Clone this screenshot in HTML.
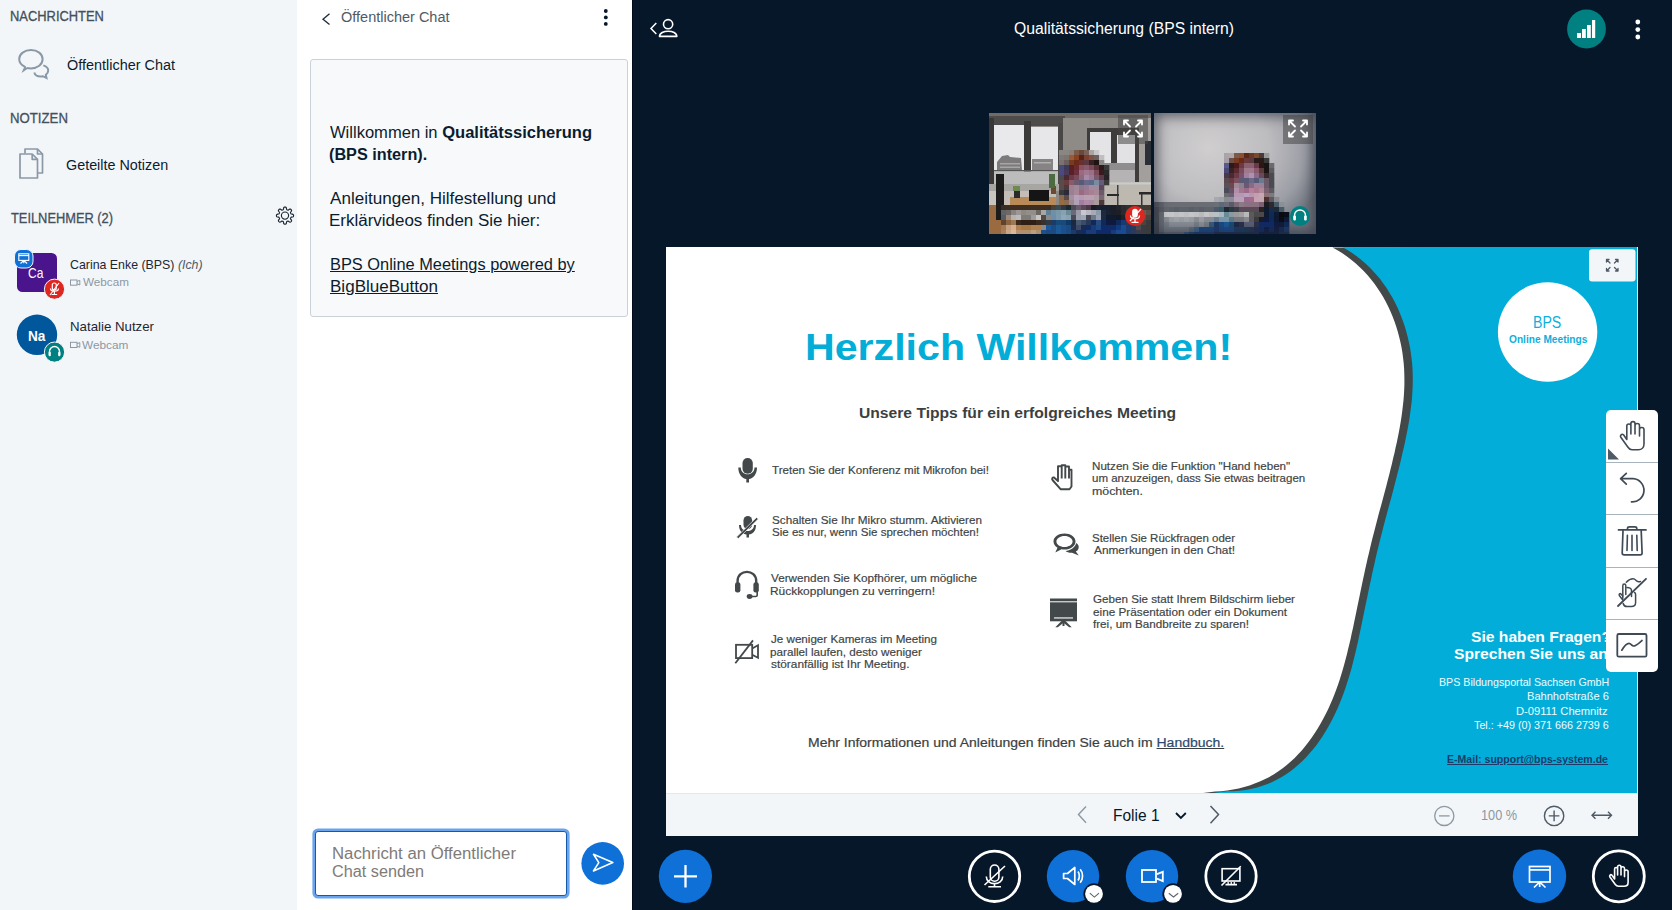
<!DOCTYPE html>
<html><head><meta charset="utf-8"><style>
html,body{margin:0;padding:0;width:1672px;height:910px;overflow:hidden;background:#06172A;font-family:"Liberation Sans",sans-serif;}
.a{position:absolute;}
.t{position:absolute;white-space:pre;line-height:normal;transform-origin:0 0;font-family:"Liberation Sans",sans-serif;}
svg{position:absolute;overflow:visible;}
</style></head><body>
<!-- Sidebar -->
<div class="a" style="left:0;top:0;width:297px;height:910px;background:#F3F6F9"></div>
<svg style="left:0;top:0" width="297" height="400" viewBox="0 0 297 400">
  <!-- chat bubbles icon -->
  <g fill="none" stroke="#8A99A7" stroke-width="2">
    <path d="M25.5,67.2 C21.5,65.2 19.2,62.3 19.2,59.2 C19.2,53.9 24.5,50 31,50 C37.5,50 42.6,53.9 42.6,59.2 C42.6,64.5 37.5,68.4 31,68.4 C29.5,68.4 28.2,68.3 27,68"/>
    <path d="M43.3,65.4 C46.3,66.3 48.2,68.2 48.2,70.6 C48.2,72.3 47.3,73.8 45.8,74.9 L46.5,78 L42.8,76.2 C42,76.4 41.3,76.5 40.5,76.5 C37.3,76.5 34.9,74.8 34.3,72.5"/>
  </g>
  <path d="M24.5,66.3 L28.2,68.5 L21.5,73 Z" fill="#8A99A7"/>
  <!-- notes icon -->
  <g fill="none" stroke="#8A99A7" stroke-width="1.7" stroke-linejoin="round">
    <path d="M25,153.5 L25,149 L37.5,149 L42.5,154 L42.5,173 L38,173"/>
    <path d="M37.5,149 L37.5,154 L42.5,154"/>
    <path d="M20,154 L32.2,154 L37.5,159.3 L37.5,178 L20,178 Z"/>
    <path d="M32.2,154 L32.2,159.3 L37.5,159.3"/>
  </g>
  <!-- gear -->
  <g transform="translate(285,215.6)" fill="none" stroke="#1B2733" stroke-width="1.15">
    <path d="M0.00,-8.55 L0.34,-8.54 L0.67,-8.49 L0.99,-8.35 L1.26,-7.98 L1.43,-7.21 L1.55,-6.44 L1.71,-6.06 L1.91,-5.89 L2.13,-5.78 L2.35,-5.68 L2.58,-5.59 L2.81,-5.51 L3.07,-5.49 L3.46,-5.65 L4.08,-6.11 L4.75,-6.53 L5.21,-6.60 L5.53,-6.47 L5.80,-6.27 L6.05,-6.05 L6.27,-5.80 L6.47,-5.53 L6.60,-5.21 L6.53,-4.75 L6.11,-4.08 L5.65,-3.46 L5.49,-3.07 L5.51,-2.81 L5.59,-2.58 L5.68,-2.35 L5.78,-2.13 L5.89,-1.91 L6.06,-1.71 L6.44,-1.55 L7.21,-1.43 L7.98,-1.26 L8.35,-0.99 L8.49,-0.67 L8.54,-0.34 L8.55,-0.00 L8.54,0.34 L8.49,0.67 L8.35,0.99 L7.98,1.26 L7.21,1.43 L6.44,1.55 L6.06,1.71 L5.89,1.91 L5.78,2.13 L5.68,2.35 L5.59,2.58 L5.51,2.81 L5.49,3.07 L5.65,3.46 L6.11,4.08 L6.53,4.75 L6.60,5.21 L6.47,5.53 L6.27,5.80 L6.05,6.05 L5.80,6.27 L5.53,6.47 L5.21,6.60 L4.75,6.53 L4.08,6.11 L3.46,5.65 L3.07,5.49 L2.81,5.51 L2.58,5.59 L2.35,5.68 L2.13,5.78 L1.91,5.89 L1.71,6.06 L1.55,6.44 L1.43,7.21 L1.26,7.98 L0.99,8.35 L0.67,8.49 L0.34,8.54 L0.00,8.55 L-0.34,8.54 L-0.67,8.49 L-0.99,8.35 L-1.26,7.98 L-1.43,7.21 L-1.55,6.44 L-1.71,6.06 L-1.91,5.89 L-2.13,5.78 L-2.35,5.68 L-2.58,5.59 L-2.81,5.51 L-3.07,5.49 L-3.46,5.65 L-4.08,6.11 L-4.75,6.53 L-5.21,6.60 L-5.53,6.47 L-5.80,6.27 L-6.05,6.05 L-6.27,5.80 L-6.47,5.53 L-6.60,5.21 L-6.53,4.75 L-6.11,4.08 L-5.65,3.46 L-5.49,3.07 L-5.51,2.81 L-5.59,2.58 L-5.68,2.35 L-5.78,2.13 L-5.89,1.91 L-6.06,1.71 L-6.44,1.55 L-7.21,1.43 L-7.98,1.26 L-8.35,0.99 L-8.49,0.67 L-8.54,0.34 L-8.55,0.00 L-8.54,-0.34 L-8.49,-0.67 L-8.35,-0.99 L-7.98,-1.26 L-7.21,-1.43 L-6.44,-1.55 L-6.06,-1.71 L-5.89,-1.91 L-5.78,-2.13 L-5.68,-2.35 L-5.59,-2.58 L-5.51,-2.81 L-5.49,-3.07 L-5.65,-3.46 L-6.11,-4.08 L-6.53,-4.75 L-6.60,-5.21 L-6.47,-5.53 L-6.27,-5.80 L-6.05,-6.05 L-5.80,-6.27 L-5.53,-6.47 L-5.21,-6.60 L-4.75,-6.53 L-4.08,-6.11 L-3.46,-5.65 L-3.07,-5.49 L-2.81,-5.51 L-2.58,-5.59 L-2.35,-5.68 L-2.13,-5.78 L-1.91,-5.89 L-1.71,-6.06 L-1.55,-6.44 L-1.43,-7.21 L-1.26,-7.98 L-0.99,-8.35 L-0.67,-8.49 L-0.34,-8.54 Z" stroke-linejoin="round"/>
    <circle r="3.6"/>
  </g>
  <!-- avatar Ca -->
  <rect x="17" y="253" width="40" height="39" rx="5.5" fill="#4A148C"/>
  <rect x="14.5" y="249.5" width="18.5" height="18.5" rx="6.5" fill="#0F70D7" stroke="#F3F6F9" stroke-width="1"/>
  <g fill="none" stroke="#FFFFFF" stroke-width="1.1">
    <rect x="18.8" y="253.8" width="10" height="6.6"/>
    <line x1="18.8" y1="255.6" x2="28.8" y2="255.6"/>
    <path d="M23.8,260.5 L20.5,263.5 M23.8,260.5 L27.1,263.5 M23.8,260.5 L23.8,263.2"/>
  </g>
  <circle cx="54.5" cy="289.2" r="10.1" fill="#DF2721" stroke="#F3F6F9" stroke-width="1"/>
  <g fill="none" stroke="#FFFFFF" stroke-width="1.2">
    <rect x="52.3" y="283" width="4" height="7" rx="2"/>
    <path d="M50.5,288.5 C50.5,292 58.5,292 58.5,288.5 M54.4,291.5 L54.4,294.5 M51.6,294.5 L57.2,294.5 M50,295 L59,283"/>
  </g>
  <!-- avatar Na -->
  <circle cx="37" cy="334.8" r="20.2" fill="#01579B"/>
  <circle cx="54.5" cy="352.1" r="10.1" fill="#008081" stroke="#F3F6F9" stroke-width="1"/>
  <g fill="none" stroke="#FFFFFF" stroke-width="1.4">
    <path d="M49.5,355 L49.5,351.5 A5,5 0 0 1 59.5,351.5 L59.5,355"/>
  </g>
  <rect x="48.6" y="351.8" width="2.2" height="4.5" rx="1" fill="#fff"/>
  <rect x="58.2" y="351.8" width="2.2" height="4.5" rx="1" fill="#fff"/>
  <!-- webcam mini icons -->
  <g fill="none" stroke="#8B98A4" stroke-width="1">
    <rect x="70.5" y="280" width="6.5" height="5.2"/>
    <path d="M77,281.5 L79.8,280.3 L79.8,285 L77,283.8"/>
    <rect x="70.5" y="342.3" width="6.5" height="5.2"/>
    <path d="M77,343.8 L79.8,342.6 L79.8,347.3 L77,346.1"/>
  </g>
</svg>

<!-- Chat panel -->
<div class="a" style="left:297px;top:0;width:335px;height:910px;background:#FFFFFF"></div>
<div class="a" style="left:310px;top:59px;width:315.5px;height:255.5px;background:#F8F9FB;border:1px solid #CBD1D8;border-radius:3px"></div>
<svg style="left:297px;top:0" width="335" height="910" viewBox="297 0 335 910">
  <path d="M329.5,13.8 L323,19.2 L329.5,24.6" fill="none" stroke="#1B2A3A" stroke-width="1.3"/>
  <circle cx="605.8" cy="11" r="1.9" fill="#06172A"/>
  <circle cx="605.8" cy="17.4" r="1.9" fill="#06172A"/>
  <circle cx="605.8" cy="23.9" r="1.9" fill="#06172A"/>
  <!-- send btn -->
  <circle cx="602.7" cy="863.4" r="21.3" fill="#0F70D7"/>
  <path d="M593.5,854.3 L612.8,862.6 L593.5,870.9 L598.8,862.6 Z" fill="none" stroke="#FFFFFF" stroke-width="1.6" stroke-linejoin="round"/>
</svg>
<div class="a" style="left:315.3px;top:830.8px;width:249.5px;height:63.5px;border:1.2px solid #1659A8;border-radius:3px;box-shadow:0 0 0 2.6px #68A5EE;background:#fff"></div>

<!-- Main area -->
<div class="a" style="left:632px;top:0;width:1px;height:910px;background:#000C1C"></div>
<svg style="left:632px;top:0" width="1040" height="60" viewBox="632 0 1040 60">
  <path d="M656.3,23 L651,28.5 L656.3,34" fill="none" stroke="#FFFFFF" stroke-width="1.5"/>
  <circle cx="668.1" cy="24.2" r="4.6" fill="none" stroke="#FFFFFF" stroke-width="1.6"/>
  <path d="M659.5,36.4 C659.5,29.5 676.8,29.5 676.8,36.4 Z" fill="none" stroke="#FFFFFF" stroke-width="1.6" stroke-linejoin="round"/>
  <circle cx="1586.5" cy="29" r="19.4" fill="#008081"/>
  <rect x="1577" y="33" width="4" height="5" fill="#fff"/>
  <rect x="1582" y="29" width="3.8" height="9" fill="#fff"/>
  <rect x="1587" y="25" width="3.8" height="13" fill="#fff"/>
  <rect x="1592" y="20" width="3.2" height="18" fill="#fff"/>
  <circle cx="1637.8" cy="22" r="2.4" fill="#fff"/>
  <circle cx="1637.8" cy="29.6" r="2.4" fill="#fff"/>
  <circle cx="1637.8" cy="37" r="2.4" fill="#fff"/>
</svg>

<!-- Webcam tile 1 -->
<div class="a" style="left:989px;top:113px;width:162px;height:121px;overflow:hidden;background:#8C8884">
  <svg style="left:0;top:0;overflow:hidden" width="162" height="121" viewBox="989 113 162 121">
    <rect x="989" y="113" width="162" height="5" fill="#6E6B68"/>
    <rect x="989" y="116" width="76" height="10" fill="#4E4C4A"/>
    <rect x="989" y="118" width="5" height="72" fill="#3A3836"/>
    <rect x="994" y="125" width="30" height="60" fill="#E9E9EB"/>
    <rect x="1024" y="121" width="7" height="68" fill="#3C3A38"/>
    <rect x="1031" y="127" width="27" height="58" fill="#E7E7E9"/>
    <rect x="1058" y="123" width="5" height="66" fill="#4A4846"/>
    <path d="M997,170 L997,162 L1002,156 L1008,155 L1010,157 L1021,158 L1022,170 Z" fill="#7C7A7A"/><rect x="1000" y="163" width="20" height="1.5" fill="#A8A6A6"/><rect x="1000" y="166.5" width="20" height="1.5" fill="#A8A6A6"/>
    <rect x="1032" y="159" width="21" height="11" fill="#858383"/><rect x="1034" y="162" width="17" height="1.5" fill="#B0AEAE"/>
    <rect x="994" y="170" width="64" height="1.5" fill="#555"/>
    <rect x="994" y="171.5" width="64" height="13" fill="#BDBCBC"/>
    <rect x="989" y="184" width="76" height="7" fill="#A8A6A2"/>
    <rect x="989" y="191" width="12" height="14" fill="#C8C4BE"/>
    <rect x="989" y="205" width="12" height="29" fill="#9A6A40"/>
    <rect x="1063" y="118" width="26" height="72" fill="#8E8A86"/>
    <rect x="1087" y="128" width="52" height="58" fill="#3F3D3B"/>
    <rect x="1090" y="132" width="21" height="50" fill="#E4E4E6"/>
    <rect x="1117" y="135" width="18" height="47" fill="#E2E2E4"/>
    <rect x="1090" y="163" width="45" height="7" fill="#8F8D8D"/>
    <rect x="1090" y="170" width="45" height="12" fill="#B5B3B3"/>
    <rect x="1139" y="118" width="12" height="116" fill="#A29F9C"/>
    <rect x="1145" y="141" width="6" height="24" fill="#2B2F38"/>
    <rect x="1101" y="182" width="50" height="23" fill="#BDB8B0"/>
    <rect x="1101" y="182.5" width="50" height="2" fill="#C8CCCC"/>
    <rect x="1117" y="185" width="1.5" height="20" fill="#404040"/>
    <rect x="1107" y="194" width="12" height="2" fill="#2A2A2A"/>
    <rect x="1139" y="192" width="12" height="2.5" fill="#2A2A2A"/>
    <rect x="1141" y="194" width="1.5" height="11" fill="#333"/>
    <rect x="1001" y="191" width="55" height="14" fill="#C4BEB6"/>
    <rect x="996" y="174" width="8" height="46" fill="#1C1C1C"/>
    <rect x="1010" y="197" width="46" height="8" fill="#B88A58"/>
    <rect x="1029" y="190" width="20" height="11" fill="#151515"/>
    <rect x="1014" y="189" width="6" height="9" fill="#2A2A2A"/>
    <rect x="1013" y="186" width="7" height="5" fill="#6E8A50"/>
    <rect x="1051" y="186" width="5" height="8" fill="#6A4A30"/>
    <rect x="1049" y="174" width="6" height="14" fill="#4E6A40"/>
    <rect x="1059" y="150" width="5.3" height="5.3" fill="#8A8684"/><rect x="1064" y="150" width="5.3" height="5.3" fill="#8A8684"/><rect x="1069" y="150" width="5.3" height="5.3" fill="#8E7E76"/><rect x="1074" y="150" width="5.3" height="5.3" fill="#7A5A48"/><rect x="1079" y="150" width="5.3" height="5.3" fill="#6A4838"/><rect x="1084" y="150" width="5.3" height="5.3" fill="#7A6058"/><rect x="1089" y="150" width="5.3" height="5.3" fill="#A8A4A4"/><rect x="1094" y="150" width="5.3" height="5.3" fill="#C8C6C6"/><rect x="1059" y="155" width="5.3" height="5.3" fill="#7E7A78"/><rect x="1064" y="155" width="5.3" height="5.3" fill="#7E7470"/><rect x="1069" y="155" width="5.3" height="5.3" fill="#9A5A38"/><rect x="1074" y="155" width="5.3" height="5.3" fill="#8A4020"/><rect x="1079" y="155" width="5.3" height="5.3" fill="#5A2018"/><rect x="1084" y="155" width="5.3" height="5.3" fill="#7A4030"/><rect x="1089" y="155" width="5.3" height="5.3" fill="#805040"/><rect x="1094" y="155" width="5.3" height="5.3" fill="#6A6060"/><rect x="1099" y="155" width="5.3" height="5.3" fill="#C0BEBE"/><rect x="1059" y="160" width="5.3" height="5.3" fill="#7A7270"/><rect x="1064" y="160" width="5.3" height="5.3" fill="#6A605E"/><rect x="1069" y="160" width="5.3" height="5.3" fill="#7A3A20"/><rect x="1074" y="160" width="5.3" height="5.3" fill="#6A2A1A"/><rect x="1079" y="160" width="5.3" height="5.3" fill="#6A3030"/><rect x="1084" y="160" width="5.3" height="5.3" fill="#5A3A40"/><rect x="1089" y="160" width="5.3" height="5.3" fill="#3A2020"/><rect x="1094" y="160" width="5.3" height="5.3" fill="#1E1414"/><rect x="1099" y="160" width="5.3" height="5.3" fill="#8A8888"/><rect x="1059" y="165" width="5.3" height="5.3" fill="#4A4A7A"/><rect x="1064" y="165" width="5.3" height="5.3" fill="#3A3A5A"/><rect x="1069" y="165" width="5.3" height="5.3" fill="#5A2020"/><rect x="1074" y="165" width="5.3" height="5.3" fill="#6A2A30"/><rect x="1079" y="165" width="5.3" height="5.3" fill="#8A5060"/><rect x="1084" y="165" width="5.3" height="5.3" fill="#8A5A6A"/><rect x="1089" y="165" width="5.3" height="5.3" fill="#7A4A5A"/><rect x="1094" y="165" width="5.3" height="5.3" fill="#5A3038"/><rect x="1099" y="165" width="5.3" height="5.3" fill="#2A1A1A"/><rect x="1104" y="165" width="5.3" height="5.3" fill="#3A3A3A"/><rect x="1059" y="170" width="5.3" height="5.3" fill="#4A4A80"/><rect x="1064" y="170" width="5.3" height="5.3" fill="#4A3A58"/><rect x="1069" y="170" width="5.3" height="5.3" fill="#5A2028"/><rect x="1074" y="170" width="5.3" height="5.3" fill="#6A3040"/><rect x="1079" y="170" width="5.3" height="5.3" fill="#9A6A80"/><rect x="1084" y="170" width="5.3" height="5.3" fill="#A07890"/><rect x="1089" y="170" width="5.3" height="5.3" fill="#9A7088"/><rect x="1094" y="170" width="5.3" height="5.3" fill="#7A4A58"/><rect x="1099" y="170" width="5.3" height="5.3" fill="#3A1A20"/><rect x="1104" y="170" width="5.3" height="5.3" fill="#2A2A2A"/><rect x="1059" y="175" width="5.3" height="5.3" fill="#4A4A50"/><rect x="1064" y="175" width="5.3" height="5.3" fill="#4A2A30"/><rect x="1069" y="175" width="5.3" height="5.3" fill="#6A3A48"/><rect x="1074" y="175" width="5.3" height="5.3" fill="#7A4A5A"/><rect x="1079" y="175" width="5.3" height="5.3" fill="#8A6A80"/><rect x="1084" y="175" width="5.3" height="5.3" fill="#A88AA8"/><rect x="1089" y="175" width="5.3" height="5.3" fill="#9A7A98"/><rect x="1094" y="175" width="5.3" height="5.3" fill="#7A5A6A"/><rect x="1099" y="175" width="5.3" height="5.3" fill="#5A3A48"/><rect x="1104" y="175" width="5.3" height="5.3" fill="#2A2028"/><rect x="1059" y="180" width="5.3" height="5.3" fill="#5A4A4A"/><rect x="1064" y="180" width="5.3" height="5.3" fill="#6A3A40"/><rect x="1069" y="180" width="5.3" height="5.3" fill="#8A5A68"/><rect x="1074" y="180" width="5.3" height="5.3" fill="#6A5A70"/><rect x="1079" y="180" width="5.3" height="5.3" fill="#5A5A78"/><rect x="1084" y="180" width="5.3" height="5.3" fill="#6A6A88"/><rect x="1089" y="180" width="5.3" height="5.3" fill="#5A6A88"/><rect x="1094" y="180" width="5.3" height="5.3" fill="#7A8AA0"/><rect x="1099" y="180" width="5.3" height="5.3" fill="#6A5A7A"/><rect x="1104" y="180" width="5.3" height="5.3" fill="#3A3A3A"/><rect x="1059" y="185" width="5.3" height="5.3" fill="#5A4A4A"/><rect x="1064" y="185" width="5.3" height="5.3" fill="#4A3A3A"/><rect x="1069" y="185" width="5.3" height="5.3" fill="#A08090"/><rect x="1074" y="185" width="5.3" height="5.3" fill="#A08898"/><rect x="1079" y="185" width="5.3" height="5.3" fill="#8A7A90"/><rect x="1084" y="185" width="5.3" height="5.3" fill="#9A7898"/><rect x="1089" y="185" width="5.3" height="5.3" fill="#A08AA0"/><rect x="1094" y="185" width="5.3" height="5.3" fill="#A08AA0"/><rect x="1099" y="185" width="5.3" height="5.3" fill="#5A4A5A"/><rect x="1059" y="190" width="5.3" height="5.3" fill="#3A3A3A"/><rect x="1064" y="190" width="5.3" height="5.3" fill="#2A2A3A"/><rect x="1069" y="190" width="5.3" height="5.3" fill="#9A8090"/><rect x="1074" y="190" width="5.3" height="5.3" fill="#A88898"/><rect x="1079" y="190" width="5.3" height="5.3" fill="#9A6A80"/><rect x="1084" y="190" width="5.3" height="5.3" fill="#A07890"/><rect x="1089" y="190" width="5.3" height="5.3" fill="#A88090"/><rect x="1094" y="190" width="5.3" height="5.3" fill="#A88898"/><rect x="1099" y="190" width="5.3" height="5.3" fill="#6A5A6A"/><rect x="1059" y="195" width="5.3" height="5.3" fill="#8A6A4A"/><rect x="1064" y="195" width="5.3" height="5.3" fill="#5A4A4A"/><rect x="1069" y="195" width="5.3" height="5.3" fill="#A090A0"/><rect x="1074" y="195" width="5.3" height="5.3" fill="#B8A0B8"/><rect x="1079" y="195" width="5.3" height="5.3" fill="#B898B0"/><rect x="1084" y="195" width="5.3" height="5.3" fill="#B8A0B0"/><rect x="1089" y="195" width="5.3" height="5.3" fill="#B8A0B0"/><rect x="1094" y="195" width="5.3" height="5.3" fill="#B09AA8"/><rect x="1099" y="195" width="5.3" height="5.3" fill="#7A6A70"/><rect x="1059" y="200" width="5.3" height="5.3" fill="#9A6A40"/><rect x="1064" y="200" width="5.3" height="5.3" fill="#8A6A50"/><rect x="1069" y="200" width="5.3" height="5.3" fill="#9A8A90"/><rect x="1074" y="200" width="5.3" height="5.3" fill="#B0A0B8"/><rect x="1079" y="200" width="5.3" height="5.3" fill="#A080A0"/><rect x="1084" y="200" width="5.3" height="5.3" fill="#B08AA8"/><rect x="1089" y="200" width="5.3" height="5.3" fill="#A88AA0"/><rect x="1094" y="200" width="5.3" height="5.3" fill="#AA9A9A"/><rect x="1099" y="200" width="5.3" height="5.3" fill="#4A3A3A"/>
    <rect x="1001" y="205" width="5.3" height="5.3" fill="#3A2C22"/><rect x="1006" y="205" width="5.3" height="5.3" fill="#3E2E22"/><rect x="1011" y="205" width="5.3" height="5.3" fill="#3E2E22"/><rect x="1016" y="205" width="5.3" height="5.3" fill="#3E2E22"/><rect x="1021" y="205" width="5.3" height="5.3" fill="#3E2E22"/><rect x="1026" y="205" width="5.3" height="5.3" fill="#3E2E22"/><rect x="1031" y="205" width="5.3" height="5.3" fill="#3E2E22"/><rect x="1036" y="205" width="5.3" height="5.3" fill="#3E2E22"/><rect x="1041" y="205" width="5.3" height="5.3" fill="#3E2E22"/><rect x="1046" y="205" width="5.3" height="5.3" fill="#3E2E22"/><rect x="1051" y="205" width="5.3" height="5.3" fill="#4A4038"/><rect x="1056" y="205" width="5.3" height="5.3" fill="#3A4A50"/><rect x="1061" y="205" width="5.3" height="5.3" fill="#2A3A40"/><rect x="1066" y="205" width="5.3" height="5.3" fill="#1A2A30"/><rect x="1071" y="205" width="5.3" height="5.3" fill="#4A4A58"/><rect x="1076" y="205" width="5.3" height="5.3" fill="#6A5A6A"/><rect x="1081" y="205" width="5.3" height="5.3" fill="#5A4A58"/><rect x="1086" y="205" width="5.3" height="5.3" fill="#4A3A48"/><rect x="1091" y="205" width="5.3" height="5.3" fill="#1A1A20"/><rect x="1096" y="205" width="5.3" height="5.3" fill="#1A2030"/><rect x="1101" y="205" width="5.3" height="5.3" fill="#16202E"/><rect x="1106" y="205" width="5.3" height="5.3" fill="#16202E"/><rect x="1111" y="205" width="5.3" height="5.3" fill="#1A1E28"/><rect x="1116" y="205" width="5.3" height="5.3" fill="#22222A"/><rect x="1121" y="205" width="5.3" height="5.3" fill="#2A2A2E"/><rect x="1126" y="205" width="5.3" height="5.3" fill="#30302E"/><rect x="1131" y="205" width="5.3" height="5.3" fill="#3A3630"/><rect x="1136" y="205" width="5.3" height="5.3" fill="#3A3630"/><rect x="1141" y="205" width="5.3" height="5.3" fill="#403A34"/><rect x="1146" y="205" width="5.3" height="5.3" fill="#403A34"/><rect x="1001" y="210" width="5.3" height="5.3" fill="#5F6468"/><rect x="1006" y="210" width="5.3" height="5.3" fill="#6C6866"/><rect x="1011" y="210" width="5.3" height="5.3" fill="#8A8480"/><rect x="1016" y="210" width="5.3" height="5.3" fill="#9C9795"/><rect x="1021" y="210" width="5.3" height="5.3" fill="#8E8883"/><rect x="1026" y="210" width="5.3" height="5.3" fill="#928E8B"/><rect x="1031" y="210" width="5.3" height="5.3" fill="#928E8B"/><rect x="1036" y="210" width="5.3" height="5.3" fill="#6B6661"/><rect x="1041" y="210" width="5.3" height="5.3" fill="#A9A5A3"/><rect x="1046" y="210" width="5.3" height="5.3" fill="#5E7F95"/><rect x="1051" y="210" width="5.3" height="5.3" fill="#7090A8"/><rect x="1056" y="210" width="5.3" height="5.3" fill="#7A98A8"/><rect x="1061" y="210" width="5.3" height="5.3" fill="#8AA0B0"/><rect x="1066" y="210" width="5.3" height="5.3" fill="#6A8A98"/><rect x="1071" y="210" width="5.3" height="5.3" fill="#6A6A78"/><rect x="1076" y="210" width="5.3" height="5.3" fill="#9A9AA8"/><rect x="1081" y="210" width="5.3" height="5.3" fill="#C8C8D0"/><rect x="1086" y="210" width="5.3" height="5.3" fill="#B8B8C0"/><rect x="1091" y="210" width="5.3" height="5.3" fill="#A8A8B8"/><rect x="1096" y="210" width="5.3" height="5.3" fill="#8A9AA8"/><rect x="1101" y="210" width="5.3" height="5.3" fill="#1A2A40"/><rect x="1106" y="210" width="5.3" height="5.3" fill="#1A2030"/><rect x="1111" y="210" width="5.3" height="5.3" fill="#1A1E28"/><rect x="1116" y="210" width="5.3" height="5.3" fill="#1E1E26"/><rect x="1121" y="210" width="5.3" height="5.3" fill="#2A2A2E"/><rect x="1126" y="210" width="5.3" height="5.3" fill="#3A3630"/><rect x="1131" y="210" width="5.3" height="5.3" fill="#6A5030"/><rect x="1136" y="210" width="5.3" height="5.3" fill="#7A6040"/><rect x="1141" y="210" width="5.3" height="5.3" fill="#6A5A50"/><rect x="1146" y="210" width="5.3" height="5.3" fill="#5A5048"/><rect x="1001" y="215" width="5.3" height="5.3" fill="#585C60"/><rect x="1006" y="215" width="5.3" height="5.3" fill="#A08878"/><rect x="1011" y="215" width="5.3" height="5.3" fill="#B5B3B2"/><rect x="1016" y="215" width="5.3" height="5.3" fill="#BDBBBA"/><rect x="1021" y="215" width="5.3" height="5.3" fill="#7F7B79"/><rect x="1026" y="215" width="5.3" height="5.3" fill="#7F7B79"/><rect x="1031" y="215" width="5.3" height="5.3" fill="#9E9C9B"/><rect x="1036" y="215" width="5.3" height="5.3" fill="#C8C6C5"/><rect x="1041" y="215" width="5.3" height="5.3" fill="#4E4B49"/><rect x="1046" y="215" width="5.3" height="5.3" fill="#8C8886"/><rect x="1051" y="215" width="5.3" height="5.3" fill="#6B8EAA"/><rect x="1056" y="215" width="5.3" height="5.3" fill="#7A98B0"/><rect x="1061" y="215" width="5.3" height="5.3" fill="#8AA8B8"/><rect x="1066" y="215" width="5.3" height="5.3" fill="#8AA0B0"/><rect x="1071" y="215" width="5.3" height="5.3" fill="#4A4A58"/><rect x="1076" y="215" width="5.3" height="5.3" fill="#9AA0B0"/><rect x="1081" y="215" width="5.3" height="5.3" fill="#A0A8B8"/><rect x="1086" y="215" width="5.3" height="5.3" fill="#4A4A58"/><rect x="1091" y="215" width="5.3" height="5.3" fill="#6A7A88"/><rect x="1096" y="215" width="5.3" height="5.3" fill="#9AA0B0"/><rect x="1101" y="215" width="5.3" height="5.3" fill="#1A2A40"/><rect x="1106" y="215" width="5.3" height="5.3" fill="#0E1A30"/><rect x="1111" y="215" width="5.3" height="5.3" fill="#0E1A30"/><rect x="1116" y="215" width="5.3" height="5.3" fill="#101828"/><rect x="1121" y="215" width="5.3" height="5.3" fill="#202028"/><rect x="1126" y="215" width="5.3" height="5.3" fill="#3A3A3A"/><rect x="1131" y="215" width="5.3" height="5.3" fill="#5A4A3A"/><rect x="1136" y="215" width="5.3" height="5.3" fill="#6A5A4A"/><rect x="1141" y="215" width="5.3" height="5.3" fill="#5A5048"/><rect x="1146" y="215" width="5.3" height="5.3" fill="#4A4440"/><rect x="1001" y="220" width="5.3" height="5.3" fill="#5E4330"/><rect x="1006" y="220" width="5.3" height="5.3" fill="#8A6440"/><rect x="1011" y="220" width="5.3" height="5.3" fill="#A07850"/><rect x="1016" y="220" width="5.3" height="5.3" fill="#3A2A1E"/><rect x="1021" y="220" width="5.3" height="5.3" fill="#2E2016"/><rect x="1026" y="220" width="5.3" height="5.3" fill="#2E2016"/><rect x="1031" y="220" width="5.3" height="5.3" fill="#2E2016"/><rect x="1036" y="220" width="5.3" height="5.3" fill="#3A2A1E"/><rect x="1041" y="220" width="5.3" height="5.3" fill="#3A3030"/><rect x="1046" y="220" width="5.3" height="5.3" fill="#2F3A48"/><rect x="1051" y="220" width="5.3" height="5.3" fill="#1C3C68"/><rect x="1056" y="220" width="5.3" height="5.3" fill="#1A4A78"/><rect x="1061" y="220" width="5.3" height="5.3" fill="#1A4878"/><rect x="1066" y="220" width="5.3" height="5.3" fill="#0E3A68"/><rect x="1071" y="220" width="5.3" height="5.3" fill="#1A2840"/><rect x="1076" y="220" width="5.3" height="5.3" fill="#4A5A70"/><rect x="1081" y="220" width="5.3" height="5.3" fill="#3A4A68"/><rect x="1086" y="220" width="5.3" height="5.3" fill="#2A3858"/><rect x="1091" y="220" width="5.3" height="5.3" fill="#0E2A58"/><rect x="1096" y="220" width="5.3" height="5.3" fill="#2A4A80"/><rect x="1101" y="220" width="5.3" height="5.3" fill="#0E2A58"/><rect x="1106" y="220" width="5.3" height="5.3" fill="#0E1A40"/><rect x="1111" y="220" width="5.3" height="5.3" fill="#0E1A38"/><rect x="1116" y="220" width="5.3" height="5.3" fill="#0E2A58"/><rect x="1121" y="220" width="5.3" height="5.3" fill="#163A78"/><rect x="1126" y="220" width="5.3" height="5.3" fill="#2A3A58"/><rect x="1131" y="220" width="5.3" height="5.3" fill="#4A4A50"/><rect x="1136" y="220" width="5.3" height="5.3" fill="#5A5048"/><rect x="1141" y="220" width="5.3" height="5.3" fill="#4A4440"/><rect x="1146" y="220" width="5.3" height="5.3" fill="#3A3A3A"/><rect x="1001" y="225" width="5.3" height="5.3" fill="#A67A50"/><rect x="1006" y="225" width="5.3" height="5.3" fill="#C8A080"/><rect x="1011" y="225" width="5.3" height="5.3" fill="#D8B090"/><rect x="1016" y="225" width="5.3" height="5.3" fill="#B08050"/><rect x="1021" y="225" width="5.3" height="5.3" fill="#A87840"/><rect x="1026" y="225" width="5.3" height="5.3" fill="#A87840"/><rect x="1031" y="225" width="5.3" height="5.3" fill="#B08050"/><rect x="1036" y="225" width="5.3" height="5.3" fill="#B08050"/><rect x="1041" y="225" width="5.3" height="5.3" fill="#8A8A88"/><rect x="1046" y="225" width="5.3" height="5.3" fill="#1858A0"/><rect x="1051" y="225" width="5.3" height="5.3" fill="#1A4A88"/><rect x="1056" y="225" width="5.3" height="5.3" fill="#1A5A98"/><rect x="1061" y="225" width="5.3" height="5.3" fill="#1A5090"/><rect x="1066" y="225" width="5.3" height="5.3" fill="#1A4A80"/><rect x="1071" y="225" width="5.3" height="5.3" fill="#1A2A50"/><rect x="1076" y="225" width="5.3" height="5.3" fill="#3A4A68"/><rect x="1081" y="225" width="5.3" height="5.3" fill="#1A2A48"/><rect x="1086" y="225" width="5.3" height="5.3" fill="#0E2A68"/><rect x="1091" y="225" width="5.3" height="5.3" fill="#1A3A78"/><rect x="1096" y="225" width="5.3" height="5.3" fill="#1A4A88"/><rect x="1101" y="225" width="5.3" height="5.3" fill="#0E2A68"/><rect x="1106" y="225" width="5.3" height="5.3" fill="#0E2A68"/><rect x="1111" y="225" width="5.3" height="5.3" fill="#0E2A68"/><rect x="1116" y="225" width="5.3" height="5.3" fill="#0E3A80"/><rect x="1121" y="225" width="5.3" height="5.3" fill="#1A4A90"/><rect x="1126" y="225" width="5.3" height="5.3" fill="#1A3A70"/><rect x="1131" y="225" width="5.3" height="5.3" fill="#2A3A58"/><rect x="1136" y="225" width="5.3" height="5.3" fill="#4A4A50"/><rect x="1141" y="225" width="5.3" height="5.3" fill="#3A3A40"/><rect x="1146" y="225" width="5.3" height="5.3" fill="#3A3A3A"/><rect x="1001" y="230" width="5.3" height="5.3" fill="#A88060"/><rect x="1006" y="230" width="5.3" height="5.3" fill="#C8A888"/><rect x="1011" y="230" width="5.3" height="5.3" fill="#D8B898"/><rect x="1016" y="230" width="5.3" height="5.3" fill="#B89070"/><rect x="1021" y="230" width="5.3" height="5.3" fill="#B09070"/><rect x="1026" y="230" width="5.3" height="5.3" fill="#B09070"/><rect x="1031" y="230" width="5.3" height="5.3" fill="#B8A080"/><rect x="1036" y="230" width="5.3" height="5.3" fill="#A89070"/><rect x="1041" y="230" width="5.3" height="5.3" fill="#1A5090"/><rect x="1046" y="230" width="5.3" height="5.3" fill="#1A4A80"/><rect x="1051" y="230" width="5.3" height="5.3" fill="#1A4A80"/><rect x="1056" y="230" width="5.3" height="5.3" fill="#1A5A98"/><rect x="1061" y="230" width="5.3" height="5.3" fill="#1A5090"/><rect x="1066" y="230" width="5.3" height="5.3" fill="#1A4A80"/><rect x="1071" y="230" width="5.3" height="5.3" fill="#1A3A68"/><rect x="1076" y="230" width="5.3" height="5.3" fill="#1A2A50"/><rect x="1081" y="230" width="5.3" height="5.3" fill="#0E2A68"/><rect x="1086" y="230" width="5.3" height="5.3" fill="#1A3A78"/><rect x="1091" y="230" width="5.3" height="5.3" fill="#1A3A78"/><rect x="1096" y="230" width="5.3" height="5.3" fill="#0E2A68"/><rect x="1101" y="230" width="5.3" height="5.3" fill="#0E2A68"/><rect x="1106" y="230" width="5.3" height="5.3" fill="#0E2A68"/><rect x="1111" y="230" width="5.3" height="5.3" fill="#1A3A78"/><rect x="1116" y="230" width="5.3" height="5.3" fill="#1A4A90"/><rect x="1121" y="230" width="5.3" height="5.3" fill="#1A4A90"/><rect x="1126" y="230" width="5.3" height="5.3" fill="#1A3A70"/><rect x="1131" y="230" width="5.3" height="5.3" fill="#2A3A58"/><rect x="1136" y="230" width="5.3" height="5.3" fill="#3A3A48"/><rect x="1141" y="230" width="5.3" height="5.3" fill="#3A3A40"/><rect x="1146" y="230" width="5.3" height="5.3" fill="#3A3A3A"/>
    <rect x="1118" y="115" width="30" height="29" fill="rgba(70,70,70,0.55)"/>
  </svg>
</div>
<!-- Webcam tile 2 -->
<div class="a" style="left:1154px;top:113px;width:162px;height:121px;overflow:hidden;background:radial-gradient(ellipse 120px 100px at 55px 35px,#D0CECF 0%,#BDBCBF 50%,#9C9EA6 80%,#70757F 100%)">
  <svg style="left:0;top:0;overflow:hidden" width="162" height="121" viewBox="1154 113 162 121">
    <rect x="1224" y="153" width="5.3" height="5.3" fill="#A8A4A8"/><rect x="1229" y="153" width="5.3" height="5.3" fill="#B0A8A8"/><rect x="1234" y="153" width="5.3" height="5.3" fill="#7A5A48"/><rect x="1239" y="153" width="5.3" height="5.3" fill="#8A5030"/><rect x="1244" y="153" width="5.3" height="5.3" fill="#5A2818"/><rect x="1249" y="153" width="5.3" height="5.3" fill="#6A3828"/><rect x="1254" y="153" width="5.3" height="5.3" fill="#7A4A30"/><rect x="1259" y="153" width="5.3" height="5.3" fill="#4A3A3A"/><rect x="1264" y="153" width="5.3" height="5.3" fill="#9A9898"/><rect x="1224" y="158" width="5.3" height="5.3" fill="#A8A0A8"/><rect x="1229" y="158" width="5.3" height="5.3" fill="#6A5048"/><rect x="1234" y="158" width="5.3" height="5.3" fill="#7A3A20"/><rect x="1239" y="158" width="5.3" height="5.3" fill="#6A2818"/><rect x="1244" y="158" width="5.3" height="5.3" fill="#6A3A38"/><rect x="1249" y="158" width="5.3" height="5.3" fill="#5A3A40"/><rect x="1254" y="158" width="5.3" height="5.3" fill="#2A1A18"/><rect x="1259" y="158" width="5.3" height="5.3" fill="#2A1A18"/><rect x="1264" y="158" width="5.3" height="5.3" fill="#3A3A3A"/><rect x="1224" y="163" width="5.3" height="5.3" fill="#5A5A8A"/><rect x="1229" y="163" width="5.3" height="5.3" fill="#2A1A1A"/><rect x="1234" y="163" width="5.3" height="5.3" fill="#4A1A1A"/><rect x="1239" y="163" width="5.3" height="5.3" fill="#6A3A48"/><rect x="1244" y="163" width="5.3" height="5.3" fill="#8A6070"/><rect x="1249" y="163" width="5.3" height="5.3" fill="#8A6070"/><rect x="1254" y="163" width="5.3" height="5.3" fill="#6A3A48"/><rect x="1259" y="163" width="5.3" height="5.3" fill="#2A1818"/><rect x="1264" y="163" width="5.3" height="5.3" fill="#1A1414"/><rect x="1269" y="163" width="5.3" height="5.3" fill="#6A6A70"/><rect x="1224" y="168" width="5.3" height="5.3" fill="#4A4A78"/><rect x="1229" y="168" width="5.3" height="5.3" fill="#3A2020"/><rect x="1234" y="168" width="5.3" height="5.3" fill="#5A2A30"/><rect x="1239" y="168" width="5.3" height="5.3" fill="#7A4A5A"/><rect x="1244" y="168" width="5.3" height="5.3" fill="#A07888"/><rect x="1249" y="168" width="5.3" height="5.3" fill="#A07890"/><rect x="1254" y="168" width="5.3" height="5.3" fill="#8A5A6A"/><rect x="1259" y="168" width="5.3" height="5.3" fill="#5A3A3A"/><rect x="1264" y="168" width="5.3" height="5.3" fill="#1A1414"/><rect x="1269" y="168" width="5.3" height="5.3" fill="#5A5A60"/><rect x="1224" y="173" width="5.3" height="5.3" fill="#4A3A48"/><rect x="1229" y="173" width="5.3" height="5.3" fill="#4A2A30"/><rect x="1234" y="173" width="5.3" height="5.3" fill="#6A3A48"/><rect x="1239" y="173" width="5.3" height="5.3" fill="#7A5070"/><rect x="1244" y="173" width="5.3" height="5.3" fill="#A080A0"/><rect x="1249" y="173" width="5.3" height="5.3" fill="#B090B0"/><rect x="1254" y="173" width="5.3" height="5.3" fill="#8A6A88"/><rect x="1259" y="173" width="5.3" height="5.3" fill="#6A4A58"/><rect x="1264" y="173" width="5.3" height="5.3" fill="#3A2A2A"/><rect x="1269" y="173" width="5.3" height="5.3" fill="#4A4A50"/><rect x="1224" y="178" width="5.3" height="5.3" fill="#5A4A50"/><rect x="1229" y="178" width="5.3" height="5.3" fill="#6A3A40"/><rect x="1234" y="178" width="5.3" height="5.3" fill="#7A5060"/><rect x="1239" y="178" width="5.3" height="5.3" fill="#5A5A70"/><rect x="1244" y="178" width="5.3" height="5.3" fill="#5A5A78"/><rect x="1249" y="178" width="5.3" height="5.3" fill="#6A6A88"/><rect x="1254" y="178" width="5.3" height="5.3" fill="#5A5A78"/><rect x="1259" y="178" width="5.3" height="5.3" fill="#6A7A90"/><rect x="1264" y="178" width="5.3" height="5.3" fill="#6A5A6A"/><rect x="1269" y="178" width="5.3" height="5.3" fill="#4A4A50"/><rect x="1224" y="183" width="5.3" height="5.3" fill="#5A5058"/><rect x="1229" y="183" width="5.3" height="5.3" fill="#6A4A50"/><rect x="1234" y="183" width="5.3" height="5.3" fill="#A08898"/><rect x="1239" y="183" width="5.3" height="5.3" fill="#8A8090"/><rect x="1244" y="183" width="5.3" height="5.3" fill="#6A5A70"/><rect x="1249" y="183" width="5.3" height="5.3" fill="#8A6A88"/><rect x="1254" y="183" width="5.3" height="5.3" fill="#9A8098"/><rect x="1259" y="183" width="5.3" height="5.3" fill="#9A8098"/><rect x="1264" y="183" width="5.3" height="5.3" fill="#6A5A6A"/><rect x="1269" y="183" width="5.3" height="5.3" fill="#4A4A50"/><rect x="1224" y="188" width="5.3" height="5.3" fill="#4A4A58"/><rect x="1229" y="188" width="5.3" height="5.3" fill="#6A5060"/><rect x="1234" y="188" width="5.3" height="5.3" fill="#B090A8"/><rect x="1239" y="188" width="5.3" height="5.3" fill="#A07890"/><rect x="1244" y="188" width="5.3" height="5.3" fill="#9A6A88"/><rect x="1249" y="188" width="5.3" height="5.3" fill="#B88098"/><rect x="1254" y="188" width="5.3" height="5.3" fill="#A87890"/><rect x="1259" y="188" width="5.3" height="5.3" fill="#B08898"/><rect x="1264" y="188" width="5.3" height="5.3" fill="#7A6070"/><rect x="1269" y="188" width="5.3" height="5.3" fill="#5A5A60"/><rect x="1224" y="193" width="5.3" height="5.3" fill="#6A6A70"/><rect x="1229" y="193" width="5.3" height="5.3" fill="#6A6078"/><rect x="1234" y="193" width="5.3" height="5.3" fill="#B898B0"/><rect x="1239" y="193" width="5.3" height="5.3" fill="#B898B0"/><rect x="1244" y="193" width="5.3" height="5.3" fill="#B8A0C0"/><rect x="1249" y="193" width="5.3" height="5.3" fill="#B898B0"/><rect x="1254" y="193" width="5.3" height="5.3" fill="#C0A0B0"/><rect x="1259" y="193" width="5.3" height="5.3" fill="#C8A8B0"/><rect x="1264" y="193" width="5.3" height="5.3" fill="#8A7070"/><rect x="1269" y="193" width="5.3" height="5.3" fill="#7A7A80"/>
    <rect x="1214" y="197" width="5.3" height="5.3" fill="#A8A8B0"/><rect x="1219" y="197" width="5.3" height="5.3" fill="#A0A4A8"/><rect x="1224" y="197" width="5.3" height="5.3" fill="#8A8A90"/><rect x="1229" y="197" width="5.3" height="5.3" fill="#8A8A98"/><rect x="1234" y="197" width="5.3" height="5.3" fill="#B8A0B8"/><rect x="1239" y="197" width="5.3" height="5.3" fill="#B8A0B8"/><rect x="1244" y="197" width="5.3" height="5.3" fill="#9A6A90"/><rect x="1249" y="197" width="5.3" height="5.3" fill="#A86A88"/><rect x="1254" y="197" width="5.3" height="5.3" fill="#C8A0B0"/><rect x="1259" y="197" width="5.3" height="5.3" fill="#C0A8B0"/><rect x="1264" y="197" width="5.3" height="5.3" fill="#4A3030"/><rect x="1269" y="197" width="5.3" height="5.3" fill="#5A5A60"/><rect x="1274" y="197" width="5.3" height="5.3" fill="#8A8A90"/><rect x="1154" y="202" width="5.3" height="5.3" fill="#5A5E66"/><rect x="1159" y="202" width="5.3" height="5.3" fill="#62666E"/><rect x="1164" y="202" width="5.3" height="5.3" fill="#6A6E74"/><rect x="1169" y="202" width="5.3" height="5.3" fill="#6A6E74"/><rect x="1174" y="202" width="5.3" height="5.3" fill="#6A6E74"/><rect x="1179" y="202" width="5.3" height="5.3" fill="#6A6E74"/><rect x="1184" y="202" width="5.3" height="5.3" fill="#6A6E74"/><rect x="1189" y="202" width="5.3" height="5.3" fill="#6A6E74"/><rect x="1194" y="202" width="5.3" height="5.3" fill="#6A6E74"/><rect x="1199" y="202" width="5.3" height="5.3" fill="#6A6E74"/><rect x="1204" y="202" width="5.3" height="5.3" fill="#6A6E74"/><rect x="1209" y="202" width="5.3" height="5.3" fill="#6A6E74"/><rect x="1214" y="202" width="5.3" height="5.3" fill="#6A7078"/><rect x="1219" y="202" width="5.3" height="5.3" fill="#5A6A78"/><rect x="1224" y="202" width="5.3" height="5.3" fill="#6A6A78"/><rect x="1229" y="202" width="5.3" height="5.3" fill="#5A5A68"/><rect x="1234" y="202" width="5.3" height="5.3" fill="#7A6A78"/><rect x="1239" y="202" width="5.3" height="5.3" fill="#8A7A88"/><rect x="1244" y="202" width="5.3" height="5.3" fill="#8A7080"/><rect x="1249" y="202" width="5.3" height="5.3" fill="#8A7080"/><rect x="1254" y="202" width="5.3" height="5.3" fill="#8A7080"/><rect x="1259" y="202" width="5.3" height="5.3" fill="#7A6070"/><rect x="1264" y="202" width="5.3" height="5.3" fill="#1A1A20"/><rect x="1269" y="202" width="5.3" height="5.3" fill="#2A2A30"/><rect x="1274" y="202" width="5.3" height="5.3" fill="#4A5A68"/><rect x="1279" y="202" width="5.3" height="5.3" fill="#8A9098"/><rect x="1154" y="207" width="5.3" height="5.3" fill="#4E525A"/><rect x="1159" y="207" width="5.3" height="5.3" fill="#5A5E66"/><rect x="1164" y="207" width="5.3" height="5.3" fill="#62666C"/><rect x="1169" y="207" width="5.3" height="5.3" fill="#5E626A"/><rect x="1174" y="207" width="5.3" height="5.3" fill="#5A5E66"/><rect x="1179" y="207" width="5.3" height="5.3" fill="#5E626A"/><rect x="1184" y="207" width="5.3" height="5.3" fill="#5E626A"/><rect x="1189" y="207" width="5.3" height="5.3" fill="#5A5E66"/><rect x="1194" y="207" width="5.3" height="5.3" fill="#5E626A"/><rect x="1199" y="207" width="5.3" height="5.3" fill="#5A5E66"/><rect x="1204" y="207" width="5.3" height="5.3" fill="#5E626A"/><rect x="1209" y="207" width="5.3" height="5.3" fill="#5E626A"/><rect x="1214" y="207" width="5.3" height="5.3" fill="#4A5A68"/><rect x="1219" y="207" width="5.3" height="5.3" fill="#3A5A68"/><rect x="1224" y="207" width="5.3" height="5.3" fill="#1A2A30"/><rect x="1229" y="207" width="5.3" height="5.3" fill="#2A3A40"/><rect x="1234" y="207" width="5.3" height="5.3" fill="#3A3A48"/><rect x="1239" y="207" width="5.3" height="5.3" fill="#5A4A58"/><rect x="1244" y="207" width="5.3" height="5.3" fill="#5A4A58"/><rect x="1249" y="207" width="5.3" height="5.3" fill="#5A4A58"/><rect x="1254" y="207" width="5.3" height="5.3" fill="#5A4A58"/><rect x="1259" y="207" width="5.3" height="5.3" fill="#2A2020"/><rect x="1264" y="207" width="5.3" height="5.3" fill="#0E1A30"/><rect x="1269" y="207" width="5.3" height="5.3" fill="#1A2A48"/><rect x="1274" y="207" width="5.3" height="5.3" fill="#1A2A38"/><rect x="1279" y="207" width="5.3" height="5.3" fill="#4A5A68"/><rect x="1154" y="212" width="5.3" height="5.3" fill="#4E525A"/><rect x="1159" y="212" width="5.3" height="5.3" fill="#6A6E74"/><rect x="1164" y="212" width="5.3" height="5.3" fill="#C8CACC"/><rect x="1169" y="212" width="5.3" height="5.3" fill="#C4C6C8"/><rect x="1174" y="212" width="5.3" height="5.3" fill="#BEC0C2"/><rect x="1179" y="212" width="5.3" height="5.3" fill="#C2C4C6"/><rect x="1184" y="212" width="5.3" height="5.3" fill="#BEC0C2"/><rect x="1189" y="212" width="5.3" height="5.3" fill="#C4C6C8"/><rect x="1194" y="212" width="5.3" height="5.3" fill="#C0C2C4"/><rect x="1199" y="212" width="5.3" height="5.3" fill="#B8BABC"/><rect x="1204" y="212" width="5.3" height="5.3" fill="#C4C6C8"/><rect x="1209" y="212" width="5.3" height="5.3" fill="#BCBEC0"/><rect x="1214" y="212" width="5.3" height="5.3" fill="#B8C0C8"/><rect x="1219" y="212" width="5.3" height="5.3" fill="#A8B8C0"/><rect x="1224" y="212" width="5.3" height="5.3" fill="#6A8A98"/><rect x="1229" y="212" width="5.3" height="5.3" fill="#8A9AA0"/><rect x="1234" y="212" width="5.3" height="5.3" fill="#9A9A9A"/><rect x="1239" y="212" width="5.3" height="5.3" fill="#A0A0A0"/><rect x="1244" y="212" width="5.3" height="5.3" fill="#B8B8B8"/><rect x="1249" y="212" width="5.3" height="5.3" fill="#5A5A5A"/><rect x="1254" y="212" width="5.3" height="5.3" fill="#4A4A4A"/><rect x="1259" y="212" width="5.3" height="5.3" fill="#4A4A4A"/><rect x="1264" y="212" width="5.3" height="5.3" fill="#0E1A30"/><rect x="1269" y="212" width="5.3" height="5.3" fill="#0E2A58"/><rect x="1274" y="212" width="5.3" height="5.3" fill="#0E1A30"/><rect x="1279" y="212" width="5.3" height="5.3" fill="#0A0A10"/><rect x="1284" y="212" width="5.3" height="5.3" fill="#0A0E18"/><rect x="1154" y="217" width="5.3" height="5.3" fill="#4E525A"/><rect x="1159" y="217" width="5.3" height="5.3" fill="#6A6E74"/><rect x="1164" y="217" width="5.3" height="5.3" fill="#8A8E94"/><rect x="1169" y="217" width="5.3" height="5.3" fill="#9A9EA4"/><rect x="1174" y="217" width="5.3" height="5.3" fill="#A0A4AA"/><rect x="1179" y="217" width="5.3" height="5.3" fill="#9A9EA4"/><rect x="1184" y="217" width="5.3" height="5.3" fill="#A0A4AA"/><rect x="1189" y="217" width="5.3" height="5.3" fill="#9A9EA4"/><rect x="1194" y="217" width="5.3" height="5.3" fill="#8A8E94"/><rect x="1199" y="217" width="5.3" height="5.3" fill="#9A9EA4"/><rect x="1204" y="217" width="5.3" height="5.3" fill="#8A8E94"/><rect x="1209" y="217" width="5.3" height="5.3" fill="#8A8E94"/><rect x="1214" y="217" width="5.3" height="5.3" fill="#6A8090"/><rect x="1219" y="217" width="5.3" height="5.3" fill="#7A98A8"/><rect x="1224" y="217" width="5.3" height="5.3" fill="#7A98A8"/><rect x="1229" y="217" width="5.3" height="5.3" fill="#5A7A88"/><rect x="1234" y="217" width="5.3" height="5.3" fill="#7A7A80"/><rect x="1239" y="217" width="5.3" height="5.3" fill="#7A7A80"/><rect x="1244" y="217" width="5.3" height="5.3" fill="#8A8A90"/><rect x="1249" y="217" width="5.3" height="5.3" fill="#5A5A60"/><rect x="1254" y="217" width="5.3" height="5.3" fill="#3A3A40"/><rect x="1259" y="217" width="5.3" height="5.3" fill="#1A1A28"/><rect x="1264" y="217" width="5.3" height="5.3" fill="#0E1A40"/><rect x="1269" y="217" width="5.3" height="5.3" fill="#0E2A58"/><rect x="1274" y="217" width="5.3" height="5.3" fill="#0E1A30"/><rect x="1279" y="217" width="5.3" height="5.3" fill="#0A0E18"/><rect x="1284" y="217" width="5.3" height="5.3" fill="#0E1A38"/><rect x="1154" y="222" width="5.3" height="5.3" fill="#4A4E56"/><rect x="1159" y="222" width="5.3" height="5.3" fill="#6A7078"/><rect x="1164" y="222" width="5.3" height="5.3" fill="#7A8088"/><rect x="1169" y="222" width="5.3" height="5.3" fill="#8A9098"/><rect x="1174" y="222" width="5.3" height="5.3" fill="#8A9098"/><rect x="1179" y="222" width="5.3" height="5.3" fill="#8A9098"/><rect x="1184" y="222" width="5.3" height="5.3" fill="#8A9098"/><rect x="1189" y="222" width="5.3" height="5.3" fill="#8A9098"/><rect x="1194" y="222" width="5.3" height="5.3" fill="#7A8088"/><rect x="1199" y="222" width="5.3" height="5.3" fill="#8A9098"/><rect x="1204" y="222" width="5.3" height="5.3" fill="#7A8088"/><rect x="1209" y="222" width="5.3" height="5.3" fill="#3A5A80"/><rect x="1214" y="222" width="5.3" height="5.3" fill="#1A3A68"/><rect x="1219" y="222" width="5.3" height="5.3" fill="#1A4A88"/><rect x="1224" y="222" width="5.3" height="5.3" fill="#1A5A98"/><rect x="1229" y="222" width="5.3" height="5.3" fill="#1A4A78"/><rect x="1234" y="222" width="5.3" height="5.3" fill="#1A2A48"/><rect x="1239" y="222" width="5.3" height="5.3" fill="#2A3048"/><rect x="1244" y="222" width="5.3" height="5.3" fill="#5A6078"/><rect x="1249" y="222" width="5.3" height="5.3" fill="#5A6078"/><rect x="1254" y="222" width="5.3" height="5.3" fill="#2A3048"/><rect x="1259" y="222" width="5.3" height="5.3" fill="#0E2A68"/><rect x="1264" y="222" width="5.3" height="5.3" fill="#0E2A68"/><rect x="1269" y="222" width="5.3" height="5.3" fill="#0E2A68"/><rect x="1274" y="222" width="5.3" height="5.3" fill="#0E1A40"/><rect x="1279" y="222" width="5.3" height="5.3" fill="#0E1A38"/><rect x="1284" y="222" width="5.3" height="5.3" fill="#0E2A58"/><rect x="1154" y="227" width="5.3" height="5.3" fill="#4A4E56"/><rect x="1159" y="227" width="5.3" height="5.3" fill="#6A7078"/><rect x="1164" y="227" width="5.3" height="5.3" fill="#7A8088"/><rect x="1169" y="227" width="5.3" height="5.3" fill="#7A8088"/><rect x="1174" y="227" width="5.3" height="5.3" fill="#7A8088"/><rect x="1179" y="227" width="5.3" height="5.3" fill="#7A8088"/><rect x="1184" y="227" width="5.3" height="5.3" fill="#7A8088"/><rect x="1189" y="227" width="5.3" height="5.3" fill="#6A7078"/><rect x="1194" y="227" width="5.3" height="5.3" fill="#3A6A98"/><rect x="1199" y="227" width="5.3" height="5.3" fill="#1A4A88"/><rect x="1204" y="227" width="5.3" height="5.3" fill="#1A4A88"/><rect x="1209" y="227" width="5.3" height="5.3" fill="#1A4A88"/><rect x="1214" y="227" width="5.3" height="5.3" fill="#1A3A78"/><rect x="1219" y="227" width="5.3" height="5.3" fill="#1A4A88"/><rect x="1224" y="227" width="5.3" height="5.3" fill="#1A4A98"/><rect x="1229" y="227" width="5.3" height="5.3" fill="#1A4A88"/><rect x="1234" y="227" width="5.3" height="5.3" fill="#1A3A68"/><rect x="1239" y="227" width="5.3" height="5.3" fill="#1A3A68"/><rect x="1244" y="227" width="5.3" height="5.3" fill="#1A3A58"/><rect x="1249" y="227" width="5.3" height="5.3" fill="#2A3048"/><rect x="1254" y="227" width="5.3" height="5.3" fill="#1A2A58"/><rect x="1259" y="227" width="5.3" height="5.3" fill="#0E2A68"/><rect x="1264" y="227" width="5.3" height="5.3" fill="#0E1A48"/><rect x="1269" y="227" width="5.3" height="5.3" fill="#0E2A58"/><rect x="1274" y="227" width="5.3" height="5.3" fill="#0E1A40"/><rect x="1279" y="227" width="5.3" height="5.3" fill="#0E2A58"/><rect x="1284" y="227" width="5.3" height="5.3" fill="#1A3A68"/><rect x="1154" y="232" width="5.3" height="5.3" fill="#4A4E56"/><rect x="1159" y="232" width="5.3" height="5.3" fill="#5A6068"/><rect x="1164" y="232" width="5.3" height="5.3" fill="#6A7078"/><rect x="1169" y="232" width="5.3" height="5.3" fill="#6A7078"/><rect x="1174" y="232" width="5.3" height="5.3" fill="#6A7078"/><rect x="1179" y="232" width="5.3" height="5.3" fill="#6A7078"/><rect x="1184" y="232" width="5.3" height="5.3" fill="#3A5A88"/><rect x="1189" y="232" width="5.3" height="5.3" fill="#1A4A80"/><rect x="1194" y="232" width="5.3" height="5.3" fill="#1A3A78"/><rect x="1199" y="232" width="5.3" height="5.3" fill="#1A3A78"/><rect x="1204" y="232" width="5.3" height="5.3" fill="#1A3A78"/><rect x="1209" y="232" width="5.3" height="5.3" fill="#1A3A78"/><rect x="1214" y="232" width="5.3" height="5.3" fill="#1A2A50"/><rect x="1219" y="232" width="5.3" height="5.3" fill="#1A2A50"/><rect x="1224" y="232" width="5.3" height="5.3" fill="#1A2A50"/><rect x="1229" y="232" width="5.3" height="5.3" fill="#1A2A50"/><rect x="1234" y="232" width="5.3" height="5.3" fill="#1A2A50"/><rect x="1239" y="232" width="5.3" height="5.3" fill="#1A2A50"/><rect x="1244" y="232" width="5.3" height="5.3" fill="#1A2A50"/><rect x="1249" y="232" width="5.3" height="5.3" fill="#1A2A50"/><rect x="1254" y="232" width="5.3" height="5.3" fill="#1A2A50"/><rect x="1259" y="232" width="5.3" height="5.3" fill="#0E1A40"/><rect x="1264" y="232" width="5.3" height="5.3" fill="#0E1A40"/><rect x="1269" y="232" width="5.3" height="5.3" fill="#0E1A40"/><rect x="1274" y="232" width="5.3" height="5.3" fill="#0E1A40"/><rect x="1279" y="232" width="5.3" height="5.3" fill="#1A2A50"/><rect x="1284" y="232" width="5.3" height="5.3" fill="#1A2A50"/>
  </svg>
  <div class="a" style="left:0;top:0;width:162px;height:121px;box-shadow:inset 0 0 12px 4px rgba(40,44,56,0.6)"></div>
  <div class="a" style="left:129px;top:2px;width:30px;height:29px;background:rgba(60,60,60,0.5)"></div>
</div>
<svg style="left:989px;top:113px" width="327" height="121" viewBox="989 113 327 121">
  <g fill="none" stroke="#FFFFFF" stroke-width="1.8" stroke-linecap="round">
    <path d="M1124,120.5 L1130,126.5 M1124,120.5 L1124,124.5 M1124,120.5 L1128,120.5"/>
    <path d="M1142,120.5 L1136,126.5 M1142,120.5 L1142,124.5 M1142,120.5 L1138,120.5"/>
    <path d="M1124,136.5 L1130,130.5 M1124,136.5 L1124,132.5 M1124,136.5 L1128,136.5"/>
    <path d="M1142,136.5 L1136,130.5 M1142,136.5 L1142,132.5 M1142,136.5 L1138,136.5"/>
    <path d="M1289,120.5 L1295,126.5 M1289,120.5 L1289,124.5 M1289,120.5 L1293,120.5"/>
    <path d="M1307,120.5 L1301,126.5 M1307,120.5 L1307,124.5 M1307,120.5 L1303,120.5"/>
    <path d="M1289,136.5 L1295,130.5 M1289,136.5 L1289,132.5 M1289,136.5 L1293,136.5"/>
    <path d="M1307,136.5 L1301,130.5 M1307,136.5 L1307,132.5 M1307,136.5 L1303,136.5"/>
  </g>
  <circle cx="1135" cy="216" r="10" fill="#DF2721"/>
  <g fill="none" stroke="#FFFFFF" stroke-width="1.3">
    <rect x="1132.8" y="209.5" width="4.4" height="7.5" rx="2.2" fill="#fff"/>
    <path d="M1130.5,215.5 C1130.5,220 1139.5,220 1139.5,215.5 M1135,219 L1135,222 M1131.5,222.3 L1138.5,222.3 M1130,221 L1141,209"/>
  </g>
  <circle cx="1300" cy="216" r="10" fill="#008081"/>
  <g fill="none" stroke="#FFFFFF" stroke-width="1.4">
    <path d="M1294.5,219.5 L1294.5,215.5 A5.5,5.5 0 0 1 1305.5,215.5 L1305.5,219.5"/>
  </g>
  <rect x="1293.3" y="215.5" width="2.6" height="5" rx="1" fill="#fff"/>
  <rect x="1304.1" y="215.5" width="2.6" height="5" rx="1" fill="#fff"/>
</svg>

<!-- Presentation -->
<div class="a" style="left:666px;top:247px;width:972px;height:589px;background:#F3F6F9"></div>
<svg style="left:666px;top:247px" width="972" height="547" viewBox="666 247 972 547">
  <rect x="666" y="247" width="971" height="546" fill="#FFFFFF"/>
  <path fill="#434849" d="M1332.5,247.4 L1332.5,247.4 L1337.5,250.3 L1342.4,253.3 L1347.0,256.5 L1351.5,259.9 L1355.8,263.5 L1359.8,267.2 L1363.7,271.1 L1367.4,275.1 L1370.9,279.2 L1374.3,283.5 L1377.4,287.9 L1380.4,292.4 L1383.2,297.0 L1385.8,301.7 L1388.2,306.5 L1390.5,311.4 L1392.6,316.4 L1394.5,321.4 L1396.2,326.5 L1397.8,331.7 L1399.2,336.9 L1400.4,342.1 L1401.5,347.3 L1402.4,352.6 L1403.1,357.9 L1403.7,363.2 L1404.1,368.5 L1404.3,373.8 L1404.4,379.1 L1404.4,384.4 L1404.2,389.7 L1403.9,395.0 L1403.5,400.3 L1402.9,405.6 L1402.3,410.8 L1401.6,416.1 L1400.8,421.3 L1399.9,426.6 L1398.9,431.9 L1397.9,437.1 L1396.8,442.4 L1395.6,447.6 L1394.5,452.9 L1393.2,458.1 L1392.0,463.4 L1390.7,468.6 L1389.4,473.9 L1388.0,479.2 L1386.7,484.4 L1385.3,489.7 L1383.9,495.0 L1382.5,500.2 L1381.1,505.5 L1379.6,510.8 L1378.2,516.1 L1376.8,521.4 L1375.5,526.6 L1374.1,531.9 L1372.7,537.3 L1371.4,542.6 L1370.1,547.9 L1368.9,553.2 L1367.6,558.6 L1366.4,563.9 L1365.2,569.2 L1364.1,574.6 L1362.9,579.9 L1361.8,585.3 L1360.7,590.6 L1359.6,596.0 L1358.5,601.3 L1357.4,606.6 L1356.3,612.0 L1355.2,617.3 L1354.1,622.6 L1353.0,627.9 L1351.8,633.1 L1350.7,638.4 L1349.5,643.6 L1348.2,648.8 L1347.0,654.0 L1345.6,659.2 L1344.2,664.4 L1342.8,669.5 L1341.3,674.6 L1339.7,679.7 L1338.0,684.7 L1336.2,689.8 L1334.3,694.7 L1332.3,699.7 L1330.2,704.6 L1328.0,709.5 L1325.6,714.3 L1323.1,719.1 L1320.5,723.8 L1317.7,728.5 L1314.8,733.0 L1311.8,737.5 L1308.7,741.8 L1305.4,746.1 L1302.0,750.2 L1298.4,754.1 L1294.7,757.9 L1290.8,761.5 L1286.8,765.0 L1282.7,768.3 L1278.4,771.3 L1274.0,774.2 L1269.4,776.9 L1264.7,779.3 L1259.8,781.6 L1254.7,783.6 L1249.6,785.5 L1244.2,787.1 L1238.7,788.4 L1233.1,789.6 L1227.3,790.5 L1221.3,791.2 L1215.2,791.6 L1195.0,794 L1637,794 L1637,247 Z"/>
  <path fill="#02AED9" d="M1342.6,247.2 L1342.6,247.2 L1347.5,250.0 L1352.2,253.1 L1356.7,256.3 L1361.1,259.7 L1365.2,263.3 L1369.2,267.1 L1373.0,270.9 L1376.6,275.0 L1380.1,279.1 L1383.3,283.4 L1386.4,287.8 L1389.3,292.4 L1392.1,297.0 L1394.6,301.7 L1397.0,306.5 L1399.2,311.4 L1401.2,316.4 L1403.1,321.5 L1404.8,326.6 L1406.3,331.7 L1407.7,336.9 L1408.9,342.2 L1410.0,347.4 L1410.8,352.7 L1411.5,358.0 L1412.1,363.3 L1412.5,368.6 L1412.7,373.9 L1412.8,379.2 L1412.7,384.5 L1412.5,389.7 L1412.2,395.0 L1411.8,400.3 L1411.2,405.5 L1410.5,410.8 L1409.8,416.0 L1409.0,421.3 L1408.1,426.5 L1407.1,431.7 L1406.0,436.9 L1405.0,442.2 L1403.8,447.4 L1402.6,452.6 L1401.4,457.8 L1400.2,463.1 L1398.9,468.3 L1397.5,473.5 L1396.2,478.7 L1394.8,484.0 L1393.5,489.2 L1392.1,494.4 L1390.7,499.7 L1389.2,504.9 L1387.8,510.2 L1386.4,515.4 L1385.0,520.7 L1383.6,525.9 L1382.3,531.2 L1380.9,536.5 L1379.6,541.7 L1378.3,547.0 L1377.0,552.3 L1375.8,557.6 L1374.6,563.0 L1373.4,568.3 L1372.2,573.6 L1371.1,578.9 L1369.9,584.2 L1368.8,589.6 L1367.7,594.9 L1366.6,600.2 L1365.5,605.5 L1364.4,610.8 L1363.3,616.1 L1362.2,621.4 L1361.1,626.7 L1360.0,631.9 L1358.9,637.2 L1357.8,642.4 L1356.6,647.6 L1355.4,652.8 L1354.1,658.0 L1352.8,663.2 L1351.5,668.3 L1350.0,673.4 L1348.5,678.5 L1346.9,683.6 L1345.3,688.6 L1343.5,693.6 L1341.6,698.6 L1339.6,703.5 L1337.5,708.4 L1335.3,713.3 L1333.0,718.1 L1330.5,722.8 L1327.9,727.5 L1325.2,732.1 L1322.3,736.7 L1319.3,741.1 L1316.2,745.4 L1312.9,749.6 L1309.4,753.6 L1305.9,757.5 L1302.2,761.2 L1298.3,764.8 L1294.3,768.2 L1290.1,771.4 L1285.8,774.4 L1281.3,777.2 L1276.6,779.8 L1271.8,782.2 L1266.9,784.3 L1261.7,786.1 L1256.4,787.7 L1250.9,789.0 L1245.3,790.1 L1239.5,790.8 L1233.5,791.2 L1227.3,791.3 L1205.0,794 L1637,794 L1637,247 Z"/>
  <circle cx="1547.6" cy="332" r="49.7" fill="#FFFFFF"/>
  <rect x="1589" y="249.2" width="46.5" height="32.4" rx="3" fill="#F3F6F9"/>
  <g fill="none" stroke="#4E5A66" stroke-width="1.3" stroke-linecap="round">
    <path d="M1606.5,259.5 L1610,263 M1606.5,259.5 L1606.5,262 M1606.5,259.5 L1609,259.5"/>
    <path d="M1618,259.5 L1614.5,263 M1618,259.5 L1618,262 M1618,259.5 L1615.5,259.5"/>
    <path d="M1606.5,271 L1610,267.5 M1606.5,271 L1606.5,268.5 M1606.5,271 L1609,271"/>
    <path d="M1618,271 L1614.5,267.5 M1618,271 L1618,268.5 M1618,271 L1615.5,271"/>
  </g>
  <!-- slide icons -->
  <g fill="#43484A">
    <!-- mic -->
    <rect x="742.5" y="458" width="10.3" height="15.8" rx="5.1"/>
    <path d="M738.3,467.5 L740.8,467.5 C740.8,476.5 754.5,476.5 754.5,467.5 L757,467.5 C757,474.5 753,478.5 749,479 L749,482.5 L746.3,482.5 L746.3,479 C742.3,478.5 738.3,474.5 738.3,467.5 Z"/>
    <!-- mic off -->
    <rect x="743.5" y="516" width="8.6" height="13" rx="4.3"/>
    <path d="M739,525 L741,525 C741,533 754,533 754,525 L756,525 C756,531.5 752.5,534 749,534.5 L749,537.5 L746.5,537.5 L746.5,534.5 C743,534 739,531.5 739,525 Z"/>
    <path d="M736.5,537 L756.5,517.5 L758.3,519 L738.3,538.5 Z" stroke="#fff" stroke-width="0.6"/>
  </g>
  <g fill="none" stroke="#43484A" stroke-width="2.2">
    <!-- headset -->
    <path d="M737.6,585 L737.6,581 C737.6,568.8 756.2,568.8 756.2,581 L756.2,585" stroke-width="2.4"/>
    <path d="M757.2,590 L757.2,595.3 C757.2,596.2 756.7,596.5 755.7,596.5 L750,596.5" stroke-width="1.6"/>
  </g>
  <g fill="#43484A">
    <rect x="735" y="582.3" width="5.4" height="10.2" rx="2.3"/>
    <rect x="753.4" y="582.3" width="5.4" height="10.2" rx="2.3"/>
    <ellipse cx="749.6" cy="596.5" rx="2.9" ry="2.4"/>
  </g>
  <g fill="none" stroke="#43484A" stroke-width="1.8">
    <!-- cam off -->
    <rect x="736" y="644.8" width="16.2" height="13.3"/>
    <path d="M752.2,648.5 L758,645.3 L758,657.8 L752.2,654.8"/>
    <path d="M735.3,663.3 L753,640.4"/>
    <!-- hand -->
    <path d="M1058,481 L1058,466.2 L1061.7,466.2 L1061.7,465.2 L1065.3,465.2 L1065.3,466.5 L1069,466.5 L1069,469.8 L1071.5,469.8 L1071.5,486.5 L1069.5,489.3 L1060.8,489.3 L1052.5,480 C1051.5,478.8 1052.5,477 1054,477.5 L1058,481 Z M1061.7,466.2 L1061.7,478.5 M1065.3,465.2 L1065.3,478.5 M1069,466.5 L1069,478.5" stroke-width="1.9" stroke-linejoin="round"/>
  </g>
  <g fill="#43484A">
    <!-- chat bubbles filled -->
    <path d="M1064.5,533.5 C1058.5,533.5 1053.5,537 1053.5,541.5 C1053.5,544 1055,546.3 1057.5,547.8 L1055.3,552.5 L1061.5,549.3 C1062.5,549.5 1063.5,549.6 1064.5,549.6 C1070.5,549.6 1075.5,546 1075.5,541.5 C1075.5,537 1070.5,533.5 1064.5,533.5 Z M1064.5,536 C1069,536 1072.6,538.5 1072.6,541.5 C1072.6,544.5 1069,547 1064.5,547 C1060,547 1056.4,544.5 1056.4,541.5 C1056.4,538.5 1060,536 1064.5,536 Z" fill-rule="evenodd"/>
    <path d="M1076.3,543 C1078.5,544.5 1079.2,546.5 1078.5,548.5 C1078,550 1077,551 1075.8,551.5 L1078.8,555.5 L1072,552.8 C1069.5,553 1067,552.3 1065.5,551 C1070,550.5 1075,548 1076.3,543 Z"/>
    <!-- presentation board -->
    <rect x="1050" y="598.5" width="27" height="2.8"/>
    <rect x="1050" y="602.3" width="27" height="19"/>
    <path d="M1055.3,627.3 L1061.5,621 L1065.5,621 L1071.7,627.3 L1069.2,627.3 L1063.5,622.8 L1057.8,627.3 Z"/>
    <rect x="1062.5" y="621" width="2" height="5"/>
  </g>
  <rect x="1054" y="617.3" width="19" height="1.3" fill="#ffffff" opacity="0.85"/>
</svg>
<div class="a" style="left:666px;top:793px;width:971px;height:1px;background:#E3E8EC"></div>
<svg style="left:666px;top:794px" width="972" height="42" viewBox="666 794 972 42">
  <path d="M1086,806.5 L1078.5,814.6 L1086,822.7" fill="none" stroke="#8B98A4" stroke-width="1.4"/>
  <path d="M1176,813 L1180.9,818 L1185.8,813" fill="none" stroke="#06172A" stroke-width="1.8"/>
  <path d="M1210.5,806 L1218.5,814.6 L1210.5,823.2" fill="none" stroke="#4E5A66" stroke-width="1.5"/>
  <circle cx="1444.3" cy="815.9" r="9.6" fill="none" stroke="#8B98A4" stroke-width="1.3"/>
  <path d="M1439,815.9 L1449.6,815.9" stroke="#8B98A4" stroke-width="1.3"/>
  <circle cx="1554.1" cy="815.9" r="9.7" fill="none" stroke="#4E5A66" stroke-width="1.4"/>
  <path d="M1548.8,815.9 L1559.4,815.9 M1554.1,810.6 L1554.1,821.2" stroke="#4E5A66" stroke-width="1.4"/>
  <path d="M1592,815.2 L1611.5,815.2 M1595.5,811.7 L1592,815.2 L1595.5,818.7 M1608,811.7 L1611.5,815.2 L1608,818.7" fill="none" stroke="#4E5A66" stroke-width="1.4"/>
</svg>

<!-- Toolbar -->
<div class="a" style="left:1606px;top:410px;width:52px;height:262px;background:#FFFFFF;border-radius:5px;z-index:5"></div>
<svg style="left:1606px;top:410px;z-index:6" width="52" height="262" viewBox="1606 410 52 262">
  <g stroke="#A7B3BD" stroke-width="1">
    <line x1="1606" y1="462.5" x2="1658" y2="462.5"/>
    <line x1="1606" y1="514.5" x2="1658" y2="514.5"/>
    <line x1="1606" y1="567.5" x2="1658" y2="567.5"/>
    <line x1="1606" y1="619.5" x2="1658" y2="619.5"/>
  </g>
  <path d="M1608,458.5 L1608,448.5 L1619,459.5 L1608,459.5 Z" fill="#4E5A66"/>
  <g fill="none" stroke="#3F4A55" stroke-width="1.5" stroke-linejoin="round" stroke-linecap="round">
    <!-- hand -->
    <path d="M1626.8,439.5 L1626.8,426 A2.05,2.05 0 0 1 1630.9,426 L1630.9,423.7 A2.05,2.05 0 0 1 1635,423.7 L1635,425.8 A2.25,2.25 0 0 1 1639.5,425.8 L1639.5,429.8 A2.25,2.25 0 0 1 1644,429.8 L1644,444 C1644,447.5 1641.5,449.8 1638.5,449.8 L1632,449.8 C1630,449.8 1628.8,448.6 1627.8,447 L1620.8,437.2 C1619.6,435.5 1621.8,433.3 1623.5,434.8 L1626.8,439.5 Z M1630.9,426 L1630.9,434 M1635,425 L1635,434 M1639.5,429.8 L1639.5,436" stroke-width="1.6"/>
    <!-- undo -->
    <path d="M1626.3,473.4 L1620.6,478.7 L1626.3,484.2 M1620.6,478.7 L1633.2,478.7 A11.6,11.6 0 0 1 1631.5,501.9" stroke-width="1.7"/>
    <!-- trash -->
    <path d="M1618.5,529.9 L1646,529.9 M1627.5,529.9 L1627.5,528.5 C1627.5,527.3 1628.3,526.9 1629.5,526.9 L1634.8,526.9 C1636,526.9 1636.8,527.3 1636.8,528.5 L1636.8,529.9" stroke-width="1.7"/>
    <path d="M1623,530.5 L1622.2,553 C1622.2,554.2 1623,554.8 1624.2,554.8 L1640.2,554.8 C1641.4,554.8 1642.1,554.2 1642.1,553 L1641.2,530.5" stroke-width="1.7"/>
    <path d="M1627.4,535.2 L1627,550.4 M1632,535.2 L1632,550.4 M1636.8,535.2 L1637.2,550.4" stroke-width="1.6"/>
    <!-- hand off -->
    <path d="M1626.3,582.3 C1628.5,580 1631,578.8 1633,578.8 C1635,578.8 1636,580.5 1637,581.2 C1638,582 1639.5,581.8 1640.5,581.5"/>
    <path d="M1622.8,598.5 L1622.8,585.8 C1622.8,583.5 1625.8,583.5 1625.8,585.8 L1625.8,594.5"/>
    <path d="M1627,587.5 C1629,587.5 1631.5,588.5 1631.5,590.5 L1631.5,596.5"/>
    <path d="M1622.8,600 L1619.5,595.8 C1618.5,594.5 1619.8,593 1621,594 L1622.8,596"/>
    <path d="M1634.5,592.5 C1635.3,592.8 1635.6,593.5 1635.6,594.5 L1635.6,602.5 C1635.6,605 1634,606.5 1631.5,606.5 L1627,606.5 C1625,606.5 1623.5,605 1623.2,603.5"/>
    <path d="M1618,606 L1646,578.8" stroke-width="1.8"/>
    <!-- chart -->
    <rect x="1617.3" y="634" width="29.2" height="22.7" rx="1.5" stroke-width="1.8"/>
    <path d="M1621.8,650.2 C1624,646.5 1626.5,643.3 1629,643.3 C1631,643.3 1631.5,646 1633.5,646 C1636.5,646 1639.5,642.5 1642,640.5" stroke-width="1.7"/>
  </g>
</svg>

<!-- Bottom bar -->
<svg style="left:632px;top:836px" width="1040" height="74" viewBox="632 836 1040 74">
  <circle cx="685.4" cy="876.3" r="26.6" fill="#0F70D7"/>
  <path d="M674,876.3 L697,876.3 M685.5,865 L685.5,887.5" stroke="#fff" stroke-width="2.3"/>
  <circle cx="994.5" cy="876.3" r="25.2" fill="none" stroke="#fff" stroke-width="2.8"/>
  <g fill="none" stroke="#fff" stroke-width="1.6">
    <rect x="990.3" y="865" width="8.6" height="16.2" rx="4.3"/>
    <path d="M986.3,876.5 C986.3,886 1002.7,886 1002.7,876.5 M994.5,883.8 L994.5,886.8 M988.3,886.8 L1001,886.8 M984.5,885 L1005,866"/>
  </g>
  <circle cx="1073" cy="876.3" r="26.2" fill="#0F70D7"/>
  <g fill="none" stroke="#fff" stroke-width="1.7" stroke-linejoin="round">
    <path d="M1063.6,873.5 L1067.5,873.5 L1074.8,867.5 L1074.8,884.5 L1067.5,878.5 L1063.6,878.5 Z"/>
    <path d="M1078,871.5 C1079.8,874 1079.8,878 1078,880.5 M1080.2,869.3 C1083.3,873 1083.3,879 1080.2,882.7"/>
  </g>
  <circle cx="1094" cy="893.9" r="10.6" fill="#06172A"/>
  <circle cx="1094" cy="893.9" r="8.9" fill="#fff"/>
  <path d="M1089.8,893.2 L1094.4,897.1 L1099,893.2" fill="none" stroke="#5A6570" stroke-width="1.1"/>
  <circle cx="1152" cy="876.3" r="26.2" fill="#0F70D7"/>
  <g fill="none" stroke="#fff" stroke-width="1.8">
    <rect x="1142" y="870" width="14" height="12"/>
    <path d="M1157,874.2 L1162.8,871.8 L1162.8,881.2 L1157,878.7"/>
  </g>
  <circle cx="1173" cy="893.9" r="10.6" fill="#06172A"/>
  <circle cx="1173" cy="893.9" r="8.9" fill="#fff"/>
  <path d="M1168.8,893.2 L1173.5,897 L1178.2,893.2" fill="none" stroke="#5A6570" stroke-width="1.1"/>
  <circle cx="1231" cy="876.3" r="25.2" fill="none" stroke="#fff" stroke-width="2.8"/>
  <g fill="none" stroke="#fff" stroke-width="1.6">
    <rect x="1222.1" y="868.7" width="17.8" height="12.3"/>
    <path d="M1225.5,884.6 L1237,884.6 M1227.5,882.9 L1228.8,882.9 M1230.6,882.9 L1231.9,882.9 M1233.6,882.9 L1234.9,882.9 M1221.5,885.5 L1240.8,866.3"/>
  </g>
  <circle cx="1539.5" cy="876.3" r="26.7" fill="#0F70D7"/>
  <g fill="none" stroke="#fff" stroke-width="1.7">
    <rect x="1529.5" y="866.5" width="20.5" height="15.5"/>
    <path d="M1529.5,869.8 L1550,869.8 M1539.7,882 L1534,887.5 M1539.7,882 L1545.5,887.5 M1539.7,882 L1539.7,887"/>
  </g>
  <circle cx="1618.8" cy="876.3" r="25.5" fill="none" stroke="#fff" stroke-width="2.8"/>
  <g fill="none" stroke="#fff" stroke-width="1.6" stroke-linejoin="round" stroke-linecap="round">
    <path d="M1614.6,879 L1614.6,869 A1.5,1.5 0 0 1 1617.6,869 L1617.6,867 A1.7,1.7 0 0 1 1621,867 L1621,868.5 A1.75,1.75 0 0 1 1624.5,868.5 L1624.5,871.8 A1.8,1.8 0 0 1 1628.1,871.8 L1628.1,882.5 C1628.1,885 1626.5,886.3 1624,886.3 L1618.5,886.3 C1617,886.3 1616,885.5 1615.3,884.5 L1609.9,877 C1609,875.7 1610.6,874 1611.9,875.1 L1614.6,879 Z M1617.6,869 L1617.6,875 M1621,868 L1621,875 M1624.5,871.8 L1624.5,876.6"/>
  </g>
</svg>

<div class="t" style="left:9.68px;top:8.10px;font-size:14px;font-weight:400;font-style:normal;color:#44505C;transform:scaleX(0.9218);-webkit-text-stroke:0.3px #44505C;">NACHRICHTEN</div>
<div class="t" style="left:67.20px;top:56.80px;font-size:14px;font-weight:400;font-style:normal;color:#0B1C2E;transform:scaleX(1.0306);">Öffentlicher Chat</div>
<div class="t" style="left:9.67px;top:109.80px;font-size:14px;font-weight:400;font-style:normal;color:#44505C;transform:scaleX(0.9428);-webkit-text-stroke:0.3px #44505C;">NOTIZEN</div>
<div class="t" style="left:66.19px;top:157.10px;font-size:14px;font-weight:400;font-style:normal;color:#0B1C2E;transform:scaleX(1.0253);">Geteilte Notizen</div>
<div class="t" style="left:11.30px;top:209.60px;font-size:14px;font-weight:400;font-style:normal;color:#44505C;transform:scaleX(0.9170);-webkit-text-stroke:0.3px #44505C;">TEILNEHMER (2)</div>
<div class="t" style="left:70.40px;top:256.80px;font-size:13px;font-weight:400;font-style:normal;color:#1A2735;transform:scaleX(0.9510);">Carina Enke (BPS) <i style="color:#4E5A66">(Ich)</i></div>
<div class="t" style="left:82.80px;top:276.20px;font-size:11.3px;font-weight:400;font-style:normal;color:#8B98A4;transform:scaleX(1.0345);">Webcam</div>
<div class="t" style="left:70.08px;top:318.80px;font-size:13px;font-weight:400;font-style:normal;color:#1A2735;transform:scaleX(1.0199);">Natalie Nutzer</div>
<div class="t" style="left:81.91px;top:338.50px;font-size:11.3px;font-weight:400;font-style:normal;color:#8B98A4;transform:scaleX(1.0459);">Webcam</div>
<div class="t" style="left:28.41px;top:263.60px;font-size:15px;font-weight:400;font-style:normal;color:#FFFFFF;transform:scaleX(0.8030);">Ca</div>
<div class="t" style="left:28.26px;top:326.90px;font-size:15px;font-weight:700;font-style:normal;color:#FFFFFF;transform:scaleX(0.9085);">Na</div>
<div class="t" style="left:341.00px;top:9.00px;font-size:14px;font-weight:400;font-style:normal;color:#4E5A66;transform:scaleX(1.0354);">Öffentlicher Chat</div>
<div class="t" style="left:330.00px;top:124.40px;font-size:16px;font-weight:400;font-style:normal;color:#0B1C2E;transform:scaleX(1.0340);">Willkommen in <b>Qualitätssicherung</b></div>
<div class="t" style="left:328.98px;top:146.20px;font-size:16px;font-weight:400;font-style:normal;color:#0B1C2E;transform:scaleX(1.0138);"><b>(BPS intern).</b></div>
<div class="t" style="left:330.00px;top:190.00px;font-size:16px;font-weight:400;font-style:normal;color:#0B1C2E;transform:scaleX(1.0671);">Anleitungen, Hilfestellung und</div>
<div class="t" style="left:328.99px;top:212.00px;font-size:16px;font-weight:400;font-style:normal;color:#0B1C2E;transform:scaleX(1.0603);">Erklärvideos finden Sie hier:</div>
<div class="t" style="left:330.00px;top:256.10px;font-size:16px;font-weight:400;font-style:normal;color:#0B1C2E;transform:scaleX(1.0232);"><u>BPS Online Meetings powered by</u></div>
<div class="t" style="left:330.00px;top:278.00px;font-size:16px;font-weight:400;font-style:normal;color:#0B1C2E;transform:scaleX(1.0650);"><u>BigBlueButton</u></div>
<div class="t" style="left:331.99px;top:844.90px;font-size:16px;font-weight:400;font-style:normal;color:#807B77;transform:scaleX(1.0467);">Nachricht an Öffentlicher</div>
<div class="t" style="left:331.98px;top:862.50px;font-size:16px;font-weight:400;font-style:normal;color:#807B77;transform:scaleX(1.0144);">Chat senden</div>
<div class="t" style="left:1013.99px;top:19.70px;font-size:16px;font-weight:400;font-style:normal;color:#FFFFFF;transform:scaleX(0.9817);">Qualitätssicherung (BPS intern)</div>
<div class="t" style="left:804.67px;top:326.50px;font-size:36px;font-weight:700;font-style:normal;color:#02ADD8;transform:scaleX(1.1427);">Herzlich Willkommen!</div>
<div class="t" style="left:858.99px;top:404.80px;font-size:14px;font-weight:700;font-style:normal;color:#3B3F41;transform:scaleX(1.1174);">Unsere Tipps für ein erfolgreiches Meeting</div>
<div class="t" style="left:771.70px;top:464.20px;font-size:11.2px;font-weight:400;font-style:normal;color:#404445;transform:scaleX(1.0340);-webkit-text-stroke:0.18px #404445;">Treten Sie der Konferenz mit Mikrofon bei!</div>
<div class="t" style="left:772.09px;top:514.00px;font-size:11.2px;font-weight:400;font-style:normal;color:#404445;transform:scaleX(1.0457);-webkit-text-stroke:0.18px #404445;">Schalten Sie Ihr Mikro stumm. Aktivieren</div>
<div class="t" style="left:772.09px;top:525.90px;font-size:11.2px;font-weight:400;font-style:normal;color:#404445;transform:scaleX(1.0338);-webkit-text-stroke:0.18px #404445;">Sie es nur, wenn Sie sprechen möchten!</div>
<div class="t" style="left:771.20px;top:572.30px;font-size:11.2px;font-weight:400;font-style:normal;color:#404445;transform:scaleX(1.0482);-webkit-text-stroke:0.18px #404445;">Verwenden Sie Kopfhörer, um mögliche</div>
<div class="t" style="left:770.19px;top:584.60px;font-size:11.2px;font-weight:400;font-style:normal;color:#404445;transform:scaleX(1.0656);-webkit-text-stroke:0.18px #404445;">Rückkopplungen zu verringern!</div>
<div class="t" style="left:771.20px;top:633.10px;font-size:11.2px;font-weight:400;font-style:normal;color:#404445;transform:scaleX(1.0387);-webkit-text-stroke:0.18px #404445;">Je weniger Kameras im Meeting</div>
<div class="t" style="left:770.20px;top:645.50px;font-size:11.2px;font-weight:400;font-style:normal;color:#404445;transform:scaleX(1.0445);-webkit-text-stroke:0.18px #404445;">parallel laufen, desto weniger</div>
<div class="t" style="left:771.20px;top:657.80px;font-size:11.2px;font-weight:400;font-style:normal;color:#404445;transform:scaleX(1.0606);-webkit-text-stroke:0.18px #404445;">störanfällig ist Ihr Meeting.</div>
<div class="t" style="left:1091.79px;top:460.10px;font-size:11.2px;font-weight:400;font-style:normal;color:#404445;transform:scaleX(1.0388);-webkit-text-stroke:0.18px #404445;">Nutzen Sie die Funktion "Hand heben"</div>
<div class="t" style="left:1091.79px;top:472.10px;font-size:11.2px;font-weight:400;font-style:normal;color:#404445;transform:scaleX(1.0295);-webkit-text-stroke:0.18px #404445;">um anzuzeigen, dass Sie etwas beitragen</div>
<div class="t" style="left:1091.74px;top:484.50px;font-size:11.2px;font-weight:400;font-style:normal;color:#404445;transform:scaleX(1.1054);-webkit-text-stroke:0.18px #404445;">möchten.</div>
<div class="t" style="left:1092.49px;top:531.70px;font-size:11.2px;font-weight:400;font-style:normal;color:#404445;transform:scaleX(1.0265);-webkit-text-stroke:0.18px #404445;">Stellen Sie Rückfragen oder</div>
<div class="t" style="left:1093.50px;top:543.70px;font-size:11.2px;font-weight:400;font-style:normal;color:#404445;transform:scaleX(1.0595);-webkit-text-stroke:0.18px #404445;">Anmerkungen in den Chat!</div>
<div class="t" style="left:1092.80px;top:593.40px;font-size:11.2px;font-weight:400;font-style:normal;color:#404445;transform:scaleX(1.0412);-webkit-text-stroke:0.18px #404445;">Geben Sie statt Ihrem Bildschirm lieber</div>
<div class="t" style="left:1092.80px;top:605.80px;font-size:11.2px;font-weight:400;font-style:normal;color:#404445;transform:scaleX(1.0502);-webkit-text-stroke:0.18px #404445;">eine Präsentation oder ein Dokument</div>
<div class="t" style="left:1092.80px;top:617.80px;font-size:11.2px;font-weight:400;font-style:normal;color:#404445;transform:scaleX(1.0409);-webkit-text-stroke:0.18px #404445;">frei, um Bandbreite zu sparen!</div>
<div class="t" style="left:808.00px;top:736.20px;font-size:12.5px;font-weight:400;font-style:normal;color:#3B3F41;transform:scaleX(1.1195);-webkit-text-stroke:0.2px #3B3F41;">Mehr Informationen und Anleitungen finden Sie auch im <u style="color:#2A4B7C">Handbuch.</u></div>
<div class="t" style="left:1533.31px;top:314.00px;font-size:16px;font-weight:400;font-style:normal;color:#0FAFDB;transform:scaleX(0.8842);">BPS</div>
<div class="t" style="left:1508.70px;top:333.70px;font-size:10px;font-weight:700;font-style:normal;color:#0FAFDB;transform:scaleX(1.0152);">Online Meetings</div>
<div class="t" style="left:1470.70px;top:627.90px;font-size:15px;font-weight:700;font-style:normal;color:#FFFFFF;transform:scaleX(1.0432);">Sie haben Fragen?</div>
<div class="t" style="left:1454.20px;top:645.00px;font-size:15px;font-weight:700;font-style:normal;color:#FFFFFF;transform:scaleX(1.0423);">Sprechen Sie uns an!</div>
<div class="t" style="left:1438.69px;top:675.60px;font-size:11px;font-weight:400;font-style:normal;color:#F2FAFD;transform:scaleX(0.9700);">BPS Bildungsportal Sachsen GmbH</div>
<div class="t" style="left:1526.98px;top:690.20px;font-size:11px;font-weight:400;font-style:normal;color:#F2FAFD;transform:scaleX(1.0072);">Bahnhofstraße 6</div>
<div class="t" style="left:1516.39px;top:704.70px;font-size:11px;font-weight:400;font-style:normal;color:#F2FAFD;transform:scaleX(1.0158);">D-09111 Chemnitz</div>
<div class="t" style="left:1474.10px;top:719.00px;font-size:11px;font-weight:400;font-style:normal;color:#F2FAFD;transform:scaleX(0.9774);">Tel.: +49 (0) 371 666 2739 6</div>
<div class="t" style="left:1446.90px;top:753.30px;font-size:11px;font-weight:700;font-style:normal;color:#1D3A6B;transform:scaleX(0.9594);"><u>E-Mail: support@bps-system.de</u></div>
<div class="t" style="left:1113.46px;top:805.90px;font-size:16.5px;font-weight:400;font-style:normal;color:#06172A;transform:scaleX(0.9396);">Folie 1</div>
<div class="t" style="left:1480.76px;top:806.90px;font-size:14px;font-weight:400;font-style:normal;color:#8B98A4;transform:scaleX(0.9075);">100 %</div>
</body></html>
